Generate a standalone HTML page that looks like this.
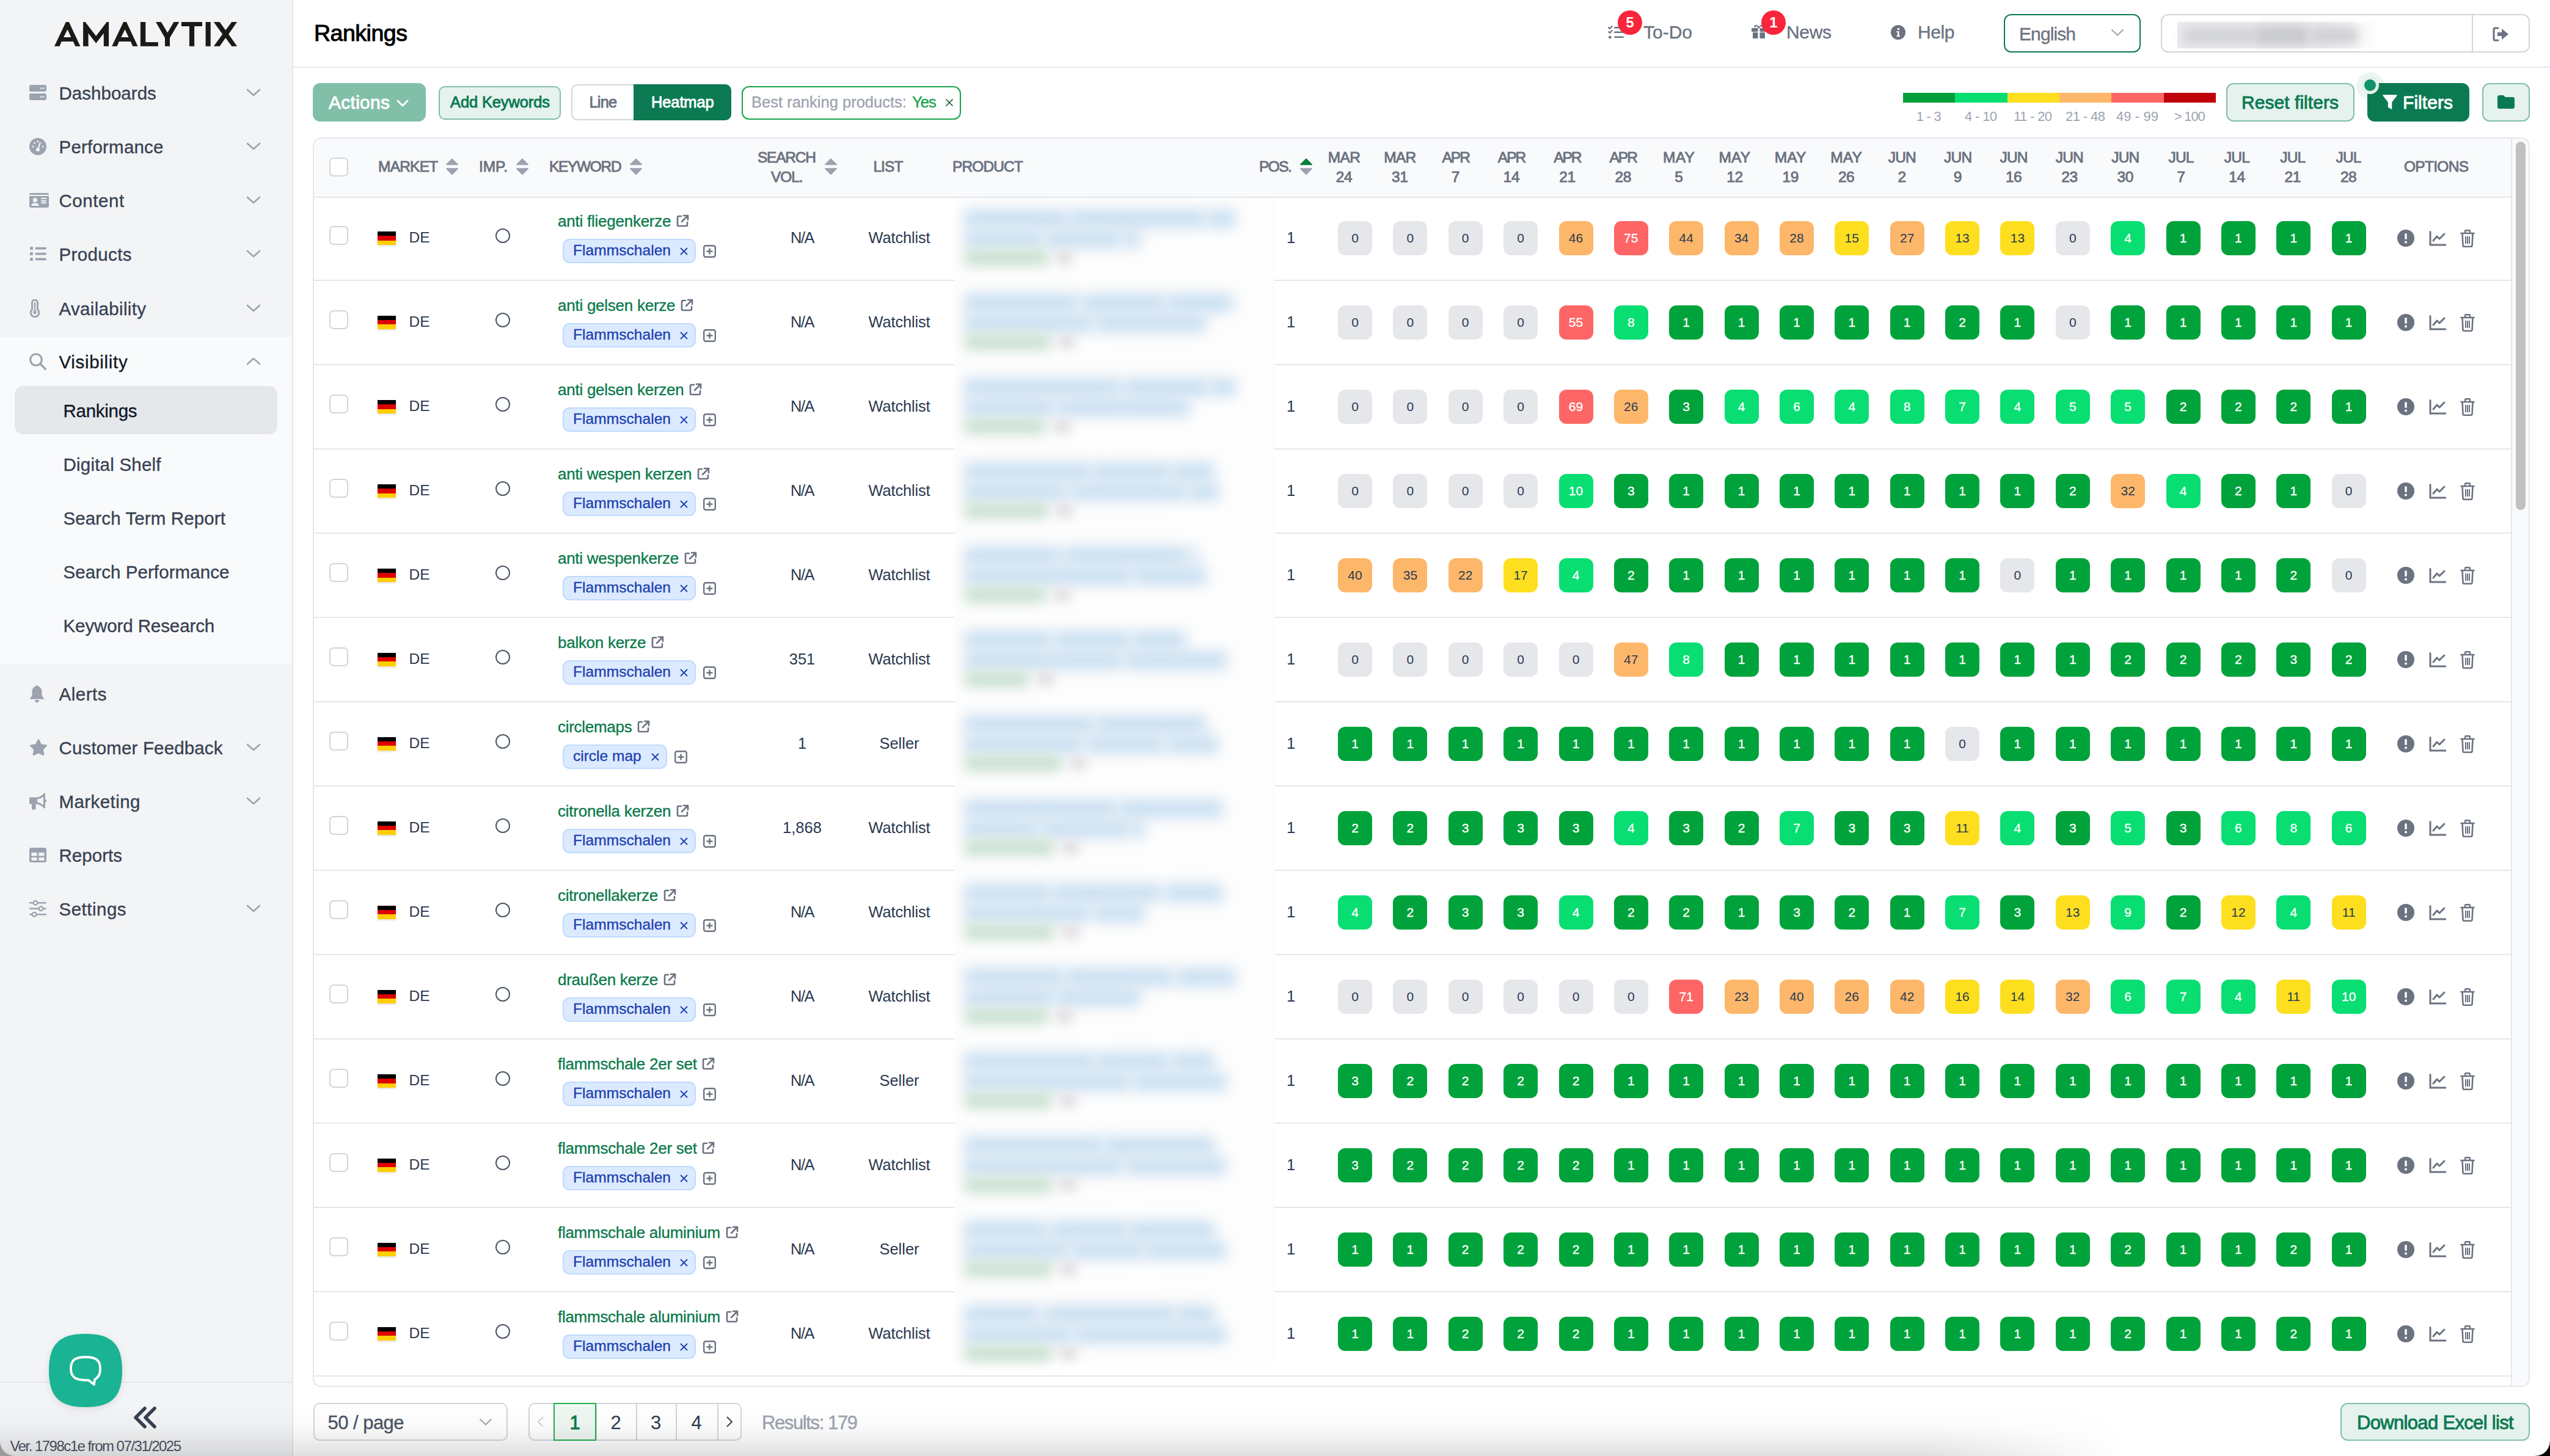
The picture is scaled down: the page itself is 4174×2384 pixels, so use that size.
<!DOCTYPE html><html><head><meta charset="utf-8"><title>Rankings</title><style>
html,body{margin:0;padding:0;}
body{width:4174px;height:2384px;overflow:hidden;position:relative;background:#fff;font-family:"Liberation Sans",sans-serif;color:#1f2937;}
.t{position:absolute;line-height:1;white-space:nowrap;}
.r{position:absolute;box-sizing:border-box;}
.b{font-weight:bold;}
.cell{position:absolute;width:56px;height:56px;border-radius:12px;font-size:21px;line-height:56px;text-align:center;}
</style></head><body>
<div class="r" style="left:0.0px;top:0.0px;width:480.0px;height:2384.0px;background:#f3f4f6;border-right:2px solid #e5e7eb;"></div>
<div class="r" style="left:0.0px;top:552.0px;width:478.0px;height:535.0px;background:#f9fafb;"></div>
<svg class="r" style="left:0;top:0" width="420" height="100" viewBox="0 0 420 100"><path fill-rule="evenodd" fill="#1a1a17" d="M89 75.8 L107.9 36 L112.9 36 L131.4 75.8 L123.2 75.8 L119.9 68 L100.7 68 L97.6 75.8 Z M104.2 61.1 L116.4 61.1 L110.4 48.2 Z M183.1 75.8 L202 36 L207 36 L225.5 75.8 L217.3 75.8 L214 68 L194.8 68 L191.7 75.8 Z M198.3 61.1 L210.5 61.1 L204.5 48.2 Z M136.1 75.8 L136.1 36 L139.5 36 L157.2 58.9 L174.8 36 L178.1 36 L178.1 75.8 L169.8 75.8 L169.8 54.5 L157.2 70.8 L144.6 54.5 L144.6 75.8 Z M229.9 36 L238.3 36 L238.3 68.9 L258.8 68.9 L258.8 75.8 L229.9 75.8 Z M255 36 L263.8 36 L274.2 53.6 L284.5 36 L293.3 36 L278 62 L278 75.8 L270 75.8 L270 62 Z M297 36 L331 36 L331 43 L318.1 43 L318.1 75.8 L309.9 75.8 L309.9 43 L297 43 Z M336.6 36 L344.7 36 L344.7 75.8 L336.6 75.8 Z M349.8 36 L359.6 36 L369.2 49.5 L379.3 36 L388 36 L374.2 56 L388 75.8 L379.3 75.8 L369.2 62 L359.6 75.8 L349.8 75.8 L364.2 56 Z"/></svg>
<svg class="r" style="left:48.0px;top:138.5px;" width="28" height="26" viewBox="0 0 28 26"><rect x="0" y="0" width="28" height="11" rx="3" fill="#9ca3af"/><rect x="0" y="14" width="28" height="11" rx="3" fill="#9ca3af"/><circle cx="19" cy="5.5" r="1.3" fill="#f3f4f6"/><circle cx="23" cy="5.5" r="1.3" fill="#f3f4f6"/><circle cx="19" cy="19.5" r="1.3" fill="#f3f4f6"/><circle cx="23" cy="19.5" r="1.3" fill="#f3f4f6"/></svg>
<div class="t" style="left:96.5px;top:137.5px;font-size:29.5px;letter-spacing:0.03px;color:#374151;-webkit-text-stroke:0.35px currentColor;">Dashboards</div>
<svg class="r" style="left:403.0px;top:144.5px;" width="24" height="13" viewBox="0 0 24 13"><path d="M2 2 L12 11 L22 2" fill="none" stroke="#9ca3af" stroke-width="2.6" stroke-linecap="round" stroke-linejoin="round"/></svg>
<svg class="r" style="left:48.0px;top:225.5px;" width="28" height="28" viewBox="0 0 28 28"><circle cx="14" cy="14" r="14" fill="#9ca3af"/><circle cx="14" cy="19" r="3" fill="#f3f4f6"/><path d="M14 19 L18 7" stroke="#f3f4f6" stroke-width="2.2"/><circle cx="6" cy="14" r="1.5" fill="#f3f4f6"/><circle cx="22" cy="14" r="1.5" fill="#f3f4f6"/><circle cx="8.5" cy="8" r="1.5" fill="#f3f4f6"/><circle cx="14" cy="5.5" r="1.5" fill="#f3f4f6"/></svg>
<div class="t" style="left:96.5px;top:225.5px;font-size:29.5px;letter-spacing:0.21px;color:#374151;-webkit-text-stroke:0.35px currentColor;">Performance</div>
<svg class="r" style="left:403.0px;top:232.5px;" width="24" height="13" viewBox="0 0 24 13"><path d="M2 2 L12 11 L22 2" fill="none" stroke="#9ca3af" stroke-width="2.6" stroke-linecap="round" stroke-linejoin="round"/></svg>
<svg class="r" style="left:48.0px;top:314.0px;" width="32" height="28" viewBox="0 0 32 28"><path d="M0 5 L0 4.5 Q0 2 3 2 L29 2 Q32 2 32 4.5 L32 5 Z" fill="#9ca3af"/><path d="M0 7 L32 7 L32 23 Q32 26 29 26 L3 26 Q0 26 0 23 Z" fill="#9ca3af"/><circle cx="9.4" cy="13.7" r="3.6" fill="#f3f4f6"/><path d="M3 23 Q4 18.8 8 18.8 L11 18.8 Q15 18.8 16 23 Z" fill="#f3f4f6"/><rect x="19" y="10" width="9" height="2.1" rx="1" fill="#f3f4f6"/><rect x="19" y="13.9" width="9" height="2" rx="1" fill="#f3f4f6"/><rect x="19" y="17.2" width="9" height="2" rx="1" fill="#f3f4f6"/></svg>
<div class="t" style="left:96.5px;top:314.0px;font-size:29.5px;letter-spacing:0.55px;color:#374151;-webkit-text-stroke:0.35px currentColor;">Content</div>
<svg class="r" style="left:403.0px;top:321.0px;" width="24" height="13" viewBox="0 0 24 13"><path d="M2 2 L12 11 L22 2" fill="none" stroke="#9ca3af" stroke-width="2.6" stroke-linecap="round" stroke-linejoin="round"/></svg>
<svg class="r" style="left:48.0px;top:404.0px;" width="28" height="23" viewBox="0 0 28 23"><rect x="1" y="0" width="5" height="5" rx="1.3" fill="#9ca3af"/><rect x="1" y="9" width="5" height="5" rx="1.3" fill="#9ca3af"/><rect x="1" y="18" width="5" height="5" rx="1.3" fill="#9ca3af"/><rect x="9.5" y="0.8" width="18.5" height="3.6" rx="1.8" fill="#9ca3af"/><rect x="9.5" y="9.8" width="18.5" height="3.6" rx="1.8" fill="#9ca3af"/><rect x="9.5" y="18.6" width="18.5" height="3.6" rx="1.8" fill="#9ca3af"/></svg>
<div class="t" style="left:96.5px;top:401.5px;font-size:29.5px;letter-spacing:0.37px;color:#374151;-webkit-text-stroke:0.35px currentColor;">Products</div>
<svg class="r" style="left:403.0px;top:408.5px;" width="24" height="13" viewBox="0 0 24 13"><path d="M2 2 L12 11 L22 2" fill="none" stroke="#9ca3af" stroke-width="2.6" stroke-linecap="round" stroke-linejoin="round"/></svg>
<svg class="r" style="left:49.0px;top:489.5px;" width="16" height="30" viewBox="0 0 16 30"><path d="M3.5 5.5 A4.5 4.5 0 0 1 12.5 5.5 L12.5 16.8 A6.8 6.8 0 1 1 3.5 16.8 Z" fill="none" stroke="#9ca3af" stroke-width="3"/><path d="M8 6 L8 19" stroke="#9ca3af" stroke-width="2.4" stroke-linecap="round"/><circle cx="8" cy="21.3" r="2.8" fill="#9ca3af"/></svg>
<div class="t" style="left:96.5px;top:490.5px;font-size:29.5px;letter-spacing:0.33px;color:#374151;-webkit-text-stroke:0.35px currentColor;">Availability</div>
<svg class="r" style="left:403.0px;top:497.5px;" width="24" height="13" viewBox="0 0 24 13"><path d="M2 2 L12 11 L22 2" fill="none" stroke="#9ca3af" stroke-width="2.6" stroke-linecap="round" stroke-linejoin="round"/></svg>
<svg class="r" style="left:48.0px;top:577.5px;" width="28" height="28" viewBox="0 0 28 28"><circle cx="11" cy="11" r="9.3" fill="none" stroke="#9ca3af" stroke-width="3"/><path d="M18 18 L26.5 26.5" stroke="#9ca3af" stroke-width="3.2" stroke-linecap="round"/></svg>
<div class="t" style="left:96.5px;top:577.5px;font-size:29.5px;letter-spacing:0.69px;color:#111827;-webkit-text-stroke:0.35px currentColor;">Visibility</div>
<svg class="r" style="left:403.0px;top:584.5px;" width="24" height="13" viewBox="0 0 24 13"><path d="M2 11 L12 2 L22 11" fill="none" stroke="#9ca3af" stroke-width="2.6" stroke-linecap="round" stroke-linejoin="round"/></svg>
<svg class="r" style="left:48.0px;top:1120.5px;" width="26" height="30" viewBox="0 0 26 30"><path d="M12.5 1 C13.5 1 14 1.8 14 2.6 C18.5 3.6 20.5 7.5 20.5 12 L20.5 17 C20.5 19 22.5 21 24 22.5 Q25 23.8 23.5 23.8 L1.5 23.8 Q0 23.8 1 22.5 C2.5 21 4.5 19 4.5 17 L4.5 12 C4.5 7.5 6.5 3.6 11 2.6 C11 1.8 11.5 1 12.5 1 Z" fill="#9ca3af"/><path d="M9 25.3 L16 25.3 Q16 29.3 12.5 29.3 Q9 29.3 9 25.3 Z" fill="#9ca3af"/></svg>
<div class="t" style="left:96.5px;top:1121.5px;font-size:29.5px;letter-spacing:0.52px;color:#374151;-webkit-text-stroke:0.35px currentColor;">Alerts</div>
<svg class="r" style="left:48.0px;top:1209.5px;" width="30" height="28" viewBox="0 0 30 28"><path d="M15 2 L18.8 9.8 L27.5 11 L21.2 17 L22.8 25.6 L15 21.5 L7.2 25.6 L8.8 17 L2.5 11 L11.2 9.8 Z" fill="#9ca3af" stroke="#9ca3af" stroke-width="3" stroke-linejoin="round"/></svg>
<div class="t" style="left:96.5px;top:1209.5px;font-size:29.5px;letter-spacing:0.15px;color:#374151;-webkit-text-stroke:0.35px currentColor;">Customer Feedback</div>
<svg class="r" style="left:403.0px;top:1216.5px;" width="24" height="13" viewBox="0 0 24 13"><path d="M2 2 L12 11 L22 2" fill="none" stroke="#9ca3af" stroke-width="2.6" stroke-linecap="round" stroke-linejoin="round"/></svg>
<svg class="r" style="left:48.0px;top:1296.5px;" width="29" height="30" viewBox="0 0 29 30"><rect x="0" y="8.6" width="12" height="11.1" rx="2" fill="#9ca3af"/><rect x="4" y="18" width="6.6" height="10.8" rx="2" fill="#9ca3af"/><path d="M11 8.6 Q18 8.6 24 2 Q26 0.6 26 3 L26 25.4 Q26 27.6 24 26.2 Q18 19.7 11 19.7 Z" fill="#9ca3af"/><path d="M13.2 11.3 Q18.6 11 23 7.2 L23 21.2 Q18.6 17.4 13.2 17.1 Z" fill="#f3f4f6"/><rect x="25.5" y="12.2" width="2.6" height="4.2" rx="1.3" fill="#9ca3af"/></svg>
<div class="t" style="left:96.5px;top:1297.5px;font-size:29.5px;letter-spacing:0.43px;color:#374151;-webkit-text-stroke:0.35px currentColor;">Marketing</div>
<svg class="r" style="left:403.0px;top:1304.5px;" width="24" height="13" viewBox="0 0 24 13"><path d="M2 2 L12 11 L22 2" fill="none" stroke="#9ca3af" stroke-width="2.6" stroke-linecap="round" stroke-linejoin="round"/></svg>
<svg class="r" style="left:48.0px;top:1387.5px;" width="28" height="24" viewBox="0 0 28 24"><rect x="0" y="0" width="28" height="24" rx="3" fill="#9ca3af"/><rect x="3.5" y="8" width="9" height="5.5" fill="#f3f4f6"/><rect x="15.5" y="8" width="9" height="5.5" fill="#f3f4f6"/><rect x="3.5" y="16" width="9" height="5" fill="#f3f4f6"/><rect x="15.5" y="16" width="9" height="5" fill="#f3f4f6"/></svg>
<div class="t" style="left:96.5px;top:1385.5px;font-size:29.5px;letter-spacing:0.03px;color:#374151;-webkit-text-stroke:0.35px currentColor;">Reports</div>
<svg class="r" style="left:48.0px;top:1473.5px;" width="28" height="28" viewBox="0 0 28 28"><rect x="0" y="3" width="28" height="2.6" rx="1.3" fill="#9ca3af"/><rect x="0" y="12.5" width="28" height="2.6" rx="1.3" fill="#9ca3af"/><rect x="0" y="22" width="28" height="2.6" rx="1.3" fill="#9ca3af"/><circle cx="10" cy="4.3" r="3.4" fill="#f3f4f6" stroke="#9ca3af" stroke-width="2.2"/><circle cx="19" cy="13.8" r="3.4" fill="#f3f4f6" stroke="#9ca3af" stroke-width="2.2"/><circle cx="8" cy="23.3" r="3.4" fill="#f3f4f6" stroke="#9ca3af" stroke-width="2.2"/></svg>
<div class="t" style="left:96.5px;top:1473.5px;font-size:29.5px;letter-spacing:0.49px;color:#374151;-webkit-text-stroke:0.35px currentColor;">Settings</div>
<svg class="r" style="left:403.0px;top:1480.5px;" width="24" height="13" viewBox="0 0 24 13"><path d="M2 2 L12 11 L22 2" fill="none" stroke="#9ca3af" stroke-width="2.6" stroke-linecap="round" stroke-linejoin="round"/></svg>
<div class="r" style="left:24.0px;top:632.0px;width:430.0px;height:79.0px;background:#e5e7eb;border-radius:14px;"></div>
<div class="t" style="left:103.5px;top:657.5px;font-size:29.5px;letter-spacing:-0.28px;color:#111827;-webkit-text-stroke:0.35px currentColor;">Rankings</div>
<div class="t" style="left:103.5px;top:745.5px;font-size:29.5px;letter-spacing:0.22px;color:#374151;-webkit-text-stroke:0.35px currentColor;">Digital Shelf</div>
<div class="t" style="left:103.5px;top:833.5px;font-size:29.5px;letter-spacing:0.12px;color:#374151;-webkit-text-stroke:0.35px currentColor;">Search Term Report</div>
<div class="t" style="left:103.5px;top:921.5px;font-size:29.5px;letter-spacing:0.08px;color:#374151;-webkit-text-stroke:0.35px currentColor;">Search Performance</div>
<div class="t" style="left:103.5px;top:1009.5px;font-size:29.5px;letter-spacing:-0.10px;color:#374151;-webkit-text-stroke:0.35px currentColor;">Keyword Research</div>
<div class="r" style="left:0.0px;top:2262.0px;width:478.0px;height:2.0px;background:#e5e7eb;"></div>
<svg class="r" style="left:80.0px;top:2184.0px;filter:drop-shadow(0 3px 6px rgba(0,0,0,0.10));" width="120" height="120" viewBox="0 0 120 120"><path d="M60 0 C103 0 120 17 120 60 C120 103 103 120 60 120 C17 120 0 103 0 60 C0 17 17 0 60 0 Z" fill="#1ab394"/></svg>
<svg class="r" style="left:112.0px;top:2219.0px;" width="56" height="56" viewBox="0 0 56 56"><path d="M28 3 C44 3 52 7 52 22 C52 32 49 36 43 40 L42 48 L33 41 C14 41 4 38 4 22 C4 7 12 3 28 3 Z" fill="none" stroke="#fff" stroke-width="3.8" stroke-linejoin="round"/></svg>
<svg class="r" style="left:217.0px;top:2303.0px;" width="40" height="36" viewBox="0 0 40 36"><path d="M20 3 L5 18 L20 33 M36 3 L21 18 L36 33" fill="none" stroke="#374151" stroke-width="5.5" stroke-linecap="round" stroke-linejoin="round"/></svg>
<div class="t" style="left:16.5px;top:2355.7px;font-size:24px;letter-spacing:-1.52px;color:#4b5563;">Ver. 1798c1e from 07/31/2025</div>
<div class="r" style="left:480.0px;top:109.0px;width:3694.0px;height:2.0px;background:#e5e7eb;"></div>
<div class="t" style="left:514.0px;top:35.8px;font-size:37.5px;letter-spacing:-0.48px;color:#000;-webkit-text-stroke:1px currentColor;">Rankings</div>
<svg class="r" style="left:2632.0px;top:42.0px;" width="26" height="22" viewBox="0 0 26 22"><path d="M1 3 L3 5 L6.5 1 M1 10 L3 12 L6.5 8" fill="none" stroke="#6b7280" stroke-width="2" stroke-linecap="round" stroke-linejoin="round"/><circle cx="3.2" cy="19" r="2.3" fill="#6b7280"/><rect x="10" y="2" width="16" height="2.6" rx="1.3" fill="#6b7280"/><rect x="10" y="9.5" width="16" height="2.6" rx="1.3" fill="#6b7280"/><rect x="10" y="17.5" width="16" height="2.6" rx="1.3" fill="#6b7280"/></svg>
<div class="t" style="left:2690.0px;top:37.6px;font-size:30px;letter-spacing:-0.01px;color:#6b7280;-webkit-text-stroke:0.35px currentColor;">To-Do</div>
<div class="r" style="left:2648.0px;top:17.0px;width:40.0px;height:40.0px;background:#f9253a;border-radius:50%;"></div>
<div class="t" style="left:2648.0px;top:25.2px;font-size:24px;width:40px;text-align:center;color:#fff;font-weight:bold;">5</div>
<svg class="r" style="left:2867.0px;top:40.0px;" width="24" height="23" viewBox="0 0 24 23"><rect x="0" y="6" width="24" height="6" rx="1" fill="#6b7280"/><rect x="2" y="13" width="20" height="10" rx="1" fill="#6b7280"/><rect x="10.5" y="6" width="3" height="17" fill="#fff"/><path d="M12 6 C9 0 4 1 6 5 M12 6 C15 0 20 1 18 5" fill="none" stroke="#6b7280" stroke-width="2"/></svg>
<div class="t" style="left:2924.0px;top:37.6px;font-size:30px;letter-spacing:-0.34px;color:#6b7280;-webkit-text-stroke:0.35px currentColor;">News</div>
<div class="r" style="left:2883.0px;top:17.0px;width:40.0px;height:40.0px;background:#f9253a;border-radius:50%;"></div>
<div class="t" style="left:2883.0px;top:25.2px;font-size:24px;width:40px;text-align:center;color:#fff;font-weight:bold;">1</div>
<svg class="r" style="left:3095.0px;top:41.0px;" width="24" height="24" viewBox="0 0 24 24"><circle cx="12" cy="12" r="12" fill="#6b7280"/><circle cx="12.5" cy="6.5" r="1.8" fill="#fff"/><path d="M9.5 10 L13.5 10 L13.5 17 L15 17 L15 19 L9.5 19 L9.5 17 L11 17 L11 12 L9.5 12 Z" fill="#fff"/></svg>
<div class="t" style="left:3139.0px;top:37.6px;font-size:30px;letter-spacing:-0.41px;color:#6b7280;-webkit-text-stroke:0.35px currentColor;">Help</div>
<div class="r" style="left:3280.0px;top:23.0px;width:224.0px;height:63.0px;border:2.5px solid #0b7a52;border-radius:12px;background:#fff;"></div>
<div class="t" style="left:3305.0px;top:40.6px;font-size:30px;letter-spacing:-0.90px;color:#6b7280;-webkit-text-stroke:0.35px currentColor;">English</div>
<svg class="r" style="left:3455.0px;top:47.0px;" width="22" height="12" viewBox="0 0 22 12"><path d="M1.5 1.5 L11 10.5 L20.5 1.5" fill="none" stroke="#9ca3af" stroke-width="2"/></svg>
<div class="r" style="left:3537.0px;top:23.0px;width:604.0px;height:63.0px;border:2px solid #d1d5db;border-radius:12px;background:#fff;"></div>
<div class="r" style="left:4046.0px;top:25.0px;width:2.0px;height:59.0px;background:#d1d5db;"></div>
<div class="r" style="left:3564px;top:36px;width:330px;height:43px;background:linear-gradient(to right,#ececee 0,#ececee 75%,rgba(255,255,255,0) 100%);"></div>
<div class="r" style="left:3572px;top:44px;width:120px;height:28px;background:#d3d4d8;filter:blur(8px);border-radius:10px;"></div>
<div class="r" style="left:3690px;top:42px;width:90px;height:32px;background:#c9cace;filter:blur(8px);border-radius:10px;"></div>
<div class="r" style="left:3780px;top:44px;width:80px;height:28px;background:#d0d1d5;filter:blur(8px);border-radius:10px;"></div>
<svg class="r" style="left:4080.0px;top:44.0px;" width="28" height="24" viewBox="0 0 28 24"><path d="M9 2 L4 2 Q2 2 2 4 L2 20 Q2 22 4 22 L9 22" fill="none" stroke="#6b7280" stroke-width="3" stroke-linecap="round"/><path d="M8 9 L15 9 L15 3 L26 12 L15 21 L15 15 L8 15 Z" fill="#6b7280"/></svg>
<div class="r" style="left:512.0px;top:136.0px;width:185.0px;height:63.0px;background:#82bfa8;border-radius:12px;"></div>
<div class="t" style="left:538.0px;top:152.6px;font-size:30px;letter-spacing:0.27px;color:#fff;-webkit-text-stroke:0.9px currentColor;">Actions</div>
<svg class="r" style="left:649.0px;top:163.0px;" width="20" height="12" viewBox="0 0 20 12"><path d="M2 2 L10 10 L18 2" fill="none" stroke="#fff" stroke-width="3" stroke-linecap="round" stroke-linejoin="round"/></svg>
<div class="r" style="left:718.0px;top:140.5px;width:200.0px;height:55.0px;background:#e6f2ee;border:2px solid #82bfa8;border-radius:10px;"></div>
<div class="t" style="left:737.0px;top:155.4px;font-size:25.5px;letter-spacing:-0.13px;color:#0b7a52;-webkit-text-stroke:0.9px currentColor;">Add Keywords</div>
<div class="r" style="left:935.0px;top:138.0px;width:262.0px;height:59.0px;background:#fff;border:2px solid #d1d5db;border-radius:10px;"></div>
<div class="r" style="left:1037.0px;top:138.0px;width:160.0px;height:59.0px;background:#0b7a52;border-radius:0 10px 10px 0;"></div>
<div class="t" style="left:964.5px;top:155.4px;font-size:25.5px;letter-spacing:-0.84px;color:#6b7280;-webkit-text-stroke:0.9px currentColor;">Line</div>
<div class="t" style="left:1066.0px;top:155.4px;font-size:25.5px;letter-spacing:-0.13px;color:#fff;-webkit-text-stroke:0.9px currentColor;">Heatmap</div>
<div class="r" style="left:1214.0px;top:140.5px;width:359.0px;height:55.0px;background:#fff;border:2.5px solid #16a34a;border-radius:12px;"></div>
<div class="t" style="left:1230.0px;top:154.9px;font-size:25.5px;letter-spacing:0.01px;color:#9ca3af;-webkit-text-stroke:0.35px currentColor;">Best ranking products:</div>
<div class="t" style="left:1493.0px;top:154.9px;font-size:25.5px;letter-spacing:-0.95px;color:#16a34a;-webkit-text-stroke:0.35px currentColor;">Yes</div>
<svg class="r" style="left:1547.0px;top:161.0px;" width="14" height="14" viewBox="0 0 14 14"><path d="M1.5 1.5 L12.5 12.5 M12.5 1.5 L1.5 12.5" stroke="#14532d" stroke-width="1.6"/></svg>
<div class="r" style="left:3115.0px;top:152.0px;width:85.6px;height:16.0px;background:#009f3a;"></div>
<div class="t" style="left:3136.7px;top:180.4px;font-size:22px;letter-spacing:-0.75px;color:#9ca3af;">1 - 3</div>
<div class="r" style="left:3200.3px;top:152.0px;width:85.6px;height:16.0px;background:#08de72;"></div>
<div class="t" style="left:3216.0px;top:180.4px;font-size:22px;letter-spacing:-0.65px;color:#9ca3af;">4 - 10</div>
<div class="r" style="left:3285.7px;top:152.0px;width:85.6px;height:16.0px;background:#fddf20;"></div>
<div class="t" style="left:3296.0px;top:180.4px;font-size:22px;letter-spacing:-0.64px;color:#9ca3af;">11 - 20</div>
<div class="r" style="left:3371.0px;top:152.0px;width:85.6px;height:16.0px;background:#fdb76a;"></div>
<div class="t" style="left:3381.0px;top:180.4px;font-size:22px;letter-spacing:-0.58px;color:#9ca3af;">21 - 48</div>
<div class="r" style="left:3456.3px;top:152.0px;width:85.6px;height:16.0px;background:#fe6666;"></div>
<div class="t" style="left:3464.0px;top:180.4px;font-size:22px;letter-spacing:0.09px;color:#9ca3af;">49 - 99</div>
<div class="r" style="left:3541.7px;top:152.0px;width:85.6px;height:16.0px;background:#c0000a;"></div>
<div class="t" style="left:3558.7px;top:180.4px;font-size:22px;letter-spacing:-1.16px;color:#9ca3af;">&gt; 100</div>
<div class="r" style="left:3644.0px;top:136.0px;width:210.0px;height:63.0px;background:#e6f2ee;border:2px solid #82bfa8;border-radius:12px;"></div>
<div class="t" style="left:3669.0px;top:152.6px;font-size:30px;letter-spacing:0.05px;color:#0b7a52;-webkit-text-stroke:0.9px currentColor;">Reset filters</div>
<div class="r" style="left:3875.0px;top:136.0px;width:167.0px;height:63.0px;background:#0b7a52;border-radius:12px;"></div>
<svg class="r" style="left:3900.0px;top:155.0px;" width="24" height="26" viewBox="0 0 24 26"><path d="M1 1 L23 1 L14.5 12 L14.5 23 L9.5 20 L9.5 12 Z" fill="#fff" stroke="#fff" stroke-width="1.5" stroke-linejoin="round"/></svg>
<div class="t" style="left:3933.0px;top:152.6px;font-size:30px;letter-spacing:0.05px;color:#fff;-webkit-text-stroke:0.9px currentColor;">Filters</div>
<div class="r" style="left:3857px;top:118px;width:46px;height:46px;border-radius:50%;background:rgba(11,122,82,0.08);"></div>
<div class="r" style="left:3865px;top:125px;width:29px;height:29px;border-radius:50%;background:#0d946a;border:5px solid #e6f1ec;"></div>
<div class="r" style="left:4063.0px;top:136.0px;width:78.0px;height:63.0px;background:#e6f2ee;border:2px solid #82bfa8;border-radius:12px;"></div>
<svg class="r" style="left:4088.0px;top:156.0px;" width="28" height="22" viewBox="0 0 28 22"><path d="M0 3 Q0 0 3 0 L10 0 L13 3 L25 3 Q28 3 28 6 L28 19 Q28 22 25 22 L3 22 Q0 22 0 19 Z" fill="#0b7a52"/></svg>
<div class="r" style="left:512.0px;top:225.0px;width:3629.0px;height:2046.0px;border:2px solid #e5e7eb;border-radius:14px;background:#fff;"></div>
<div class="r" style="left:514.0px;top:227.0px;width:3596.0px;height:96.0px;background:#f9fafb;border-radius:12px 0 0 0;"></div>
<div class="r" style="left:514.0px;top:322.0px;width:3596.0px;height:2.0px;background:#e5e7eb;"></div>
<div class="r" style="left:4110.0px;top:227.0px;width:2.0px;height:2042.0px;background:#e5e7eb;"></div>
<div class="r" style="left:4112.0px;top:227.0px;width:27.0px;height:2042.0px;background:#f9fafb;border-radius:0 12px 12px 0;"></div>
<div class="r" style="left:4118.0px;top:232.0px;width:16.0px;height:603.0px;background:#c1c1c1;border-radius:8px;"></div>
<div class="r" style="left:539.0px;top:258.0px;width:31.0px;height:31.0px;border:2px solid #d1d5db;border-radius:7px;background:#fff;"></div>
<div class="t" style="left:619.0px;top:261.3px;font-size:24.5px;letter-spacing:-0.78px;color:#6b7280;-webkit-text-stroke:0.9px currentColor;">MARKET</div>
<svg class="r" style="left:730.0px;top:258.0px;" width="20" height="30" viewBox="-1 -1 22 32"><path d="M10 0 L20 10 L0 10 Z" fill="#9ca3af" stroke="#9ca3af" stroke-width="2" stroke-linejoin="round" transform="translate(0 1)"/><path d="M0 19 L20 19 L10 29 Z" fill="#9ca3af" stroke="#9ca3af" stroke-width="2" stroke-linejoin="round" transform="translate(0 -0.5)"/></svg>
<div class="t" style="left:784.0px;top:261.3px;font-size:24.5px;letter-spacing:-0.07px;color:#6b7280;-webkit-text-stroke:0.9px currentColor;">IMP.</div>
<svg class="r" style="left:845.0px;top:258.0px;" width="20" height="30" viewBox="-1 -1 22 32"><path d="M10 0 L20 10 L0 10 Z" fill="#9ca3af" stroke="#9ca3af" stroke-width="2" stroke-linejoin="round" transform="translate(0 1)"/><path d="M0 19 L20 19 L10 29 Z" fill="#9ca3af" stroke="#9ca3af" stroke-width="2" stroke-linejoin="round" transform="translate(0 -0.5)"/></svg>
<div class="t" style="left:899.0px;top:261.3px;font-size:24.5px;letter-spacing:-1.33px;color:#6b7280;-webkit-text-stroke:0.9px currentColor;">KEYWORD</div>
<svg class="r" style="left:1031.0px;top:258.0px;" width="20" height="30" viewBox="-1 -1 22 32"><path d="M10 0 L20 10 L0 10 Z" fill="#9ca3af" stroke="#9ca3af" stroke-width="2" stroke-linejoin="round" transform="translate(0 1)"/><path d="M0 19 L20 19 L10 29 Z" fill="#9ca3af" stroke="#9ca3af" stroke-width="2" stroke-linejoin="round" transform="translate(0 -0.5)"/></svg>
<div class="t" style="left:1240.0px;top:245.8px;font-size:24.5px;letter-spacing:-1.22px;color:#6b7280;-webkit-text-stroke:0.9px currentColor;">SEARCH</div>
<div class="t" style="left:1262.0px;top:277.8px;font-size:24.5px;letter-spacing:-1.11px;color:#6b7280;-webkit-text-stroke:0.9px currentColor;">VOL.</div>
<svg class="r" style="left:1350.0px;top:258.0px;" width="20" height="30" viewBox="-1 -1 22 32"><path d="M10 0 L20 10 L0 10 Z" fill="#9ca3af" stroke="#9ca3af" stroke-width="2" stroke-linejoin="round" transform="translate(0 1)"/><path d="M0 19 L20 19 L10 29 Z" fill="#9ca3af" stroke="#9ca3af" stroke-width="2" stroke-linejoin="round" transform="translate(0 -0.5)"/></svg>
<div class="t" style="left:1429.4px;top:261.3px;font-size:24.5px;letter-spacing:-0.92px;color:#6b7280;-webkit-text-stroke:0.9px currentColor;">LIST</div>
<div class="t" style="left:1559.0px;top:261.3px;font-size:24.5px;letter-spacing:-0.90px;color:#6b7280;-webkit-text-stroke:0.9px currentColor;">PRODUCT</div>
<div class="t" style="left:2061.0px;top:261.3px;font-size:24.5px;letter-spacing:-1.62px;color:#6b7280;-webkit-text-stroke:0.9px currentColor;">POS.</div>
<svg class="r" style="left:2128.0px;top:258.0px;" width="20" height="30" viewBox="-1 -1 22 32"><path d="M10 0 L20 10 L0 10 Z" fill="#0a7d3a" stroke="#0a7d3a" stroke-width="2" stroke-linejoin="round" transform="translate(0 1)"/><path d="M0 19 L20 19 L10 29 Z" fill="#9ca3af" stroke="#9ca3af" stroke-width="2" stroke-linejoin="round" transform="translate(0 -0.5)"/></svg>
<div class="t" style="left:2160.0px;top:245.8px;font-size:24.5px;letter-spacing:-0.72px;width:80px;text-align:center;color:#6b7280;-webkit-text-stroke:0.9px currentColor;">MAR</div>
<div class="t" style="left:2160.0px;top:277.8px;font-size:24.5px;letter-spacing:-0.45px;width:80px;text-align:center;color:#6b7280;-webkit-text-stroke:0.9px currentColor;">24</div>
<div class="t" style="left:2251.3px;top:245.8px;font-size:24.5px;letter-spacing:-0.72px;width:80px;text-align:center;color:#6b7280;-webkit-text-stroke:0.9px currentColor;">MAR</div>
<div class="t" style="left:2251.3px;top:277.8px;font-size:24.5px;letter-spacing:-0.45px;width:80px;text-align:center;color:#6b7280;-webkit-text-stroke:0.9px currentColor;">31</div>
<div class="t" style="left:2342.7px;top:245.8px;font-size:24.5px;letter-spacing:-2.04px;width:80px;text-align:center;color:#6b7280;-webkit-text-stroke:0.9px currentColor;">APR</div>
<div class="t" style="left:2342.7px;top:277.8px;font-size:24.5px;letter-spacing:0.00px;width:80px;text-align:center;color:#6b7280;-webkit-text-stroke:0.9px currentColor;">7</div>
<div class="t" style="left:2434.0px;top:245.8px;font-size:24.5px;letter-spacing:-2.04px;width:80px;text-align:center;color:#6b7280;-webkit-text-stroke:0.9px currentColor;">APR</div>
<div class="t" style="left:2434.0px;top:277.8px;font-size:24.5px;letter-spacing:-0.45px;width:80px;text-align:center;color:#6b7280;-webkit-text-stroke:0.9px currentColor;">14</div>
<div class="t" style="left:2525.4px;top:245.8px;font-size:24.5px;letter-spacing:-2.04px;width:80px;text-align:center;color:#6b7280;-webkit-text-stroke:0.9px currentColor;">APR</div>
<div class="t" style="left:2525.4px;top:277.8px;font-size:24.5px;letter-spacing:-0.45px;width:80px;text-align:center;color:#6b7280;-webkit-text-stroke:0.9px currentColor;">21</div>
<div class="t" style="left:2616.7px;top:245.8px;font-size:24.5px;letter-spacing:-2.04px;width:80px;text-align:center;color:#6b7280;-webkit-text-stroke:0.9px currentColor;">APR</div>
<div class="t" style="left:2616.7px;top:277.8px;font-size:24.5px;letter-spacing:-0.45px;width:80px;text-align:center;color:#6b7280;-webkit-text-stroke:0.9px currentColor;">28</div>
<div class="t" style="left:2708.0px;top:245.8px;font-size:24.5px;letter-spacing:0.21px;width:80px;text-align:center;color:#6b7280;-webkit-text-stroke:0.9px currentColor;">MAY</div>
<div class="t" style="left:2708.0px;top:277.8px;font-size:24.5px;letter-spacing:0.00px;width:80px;text-align:center;color:#6b7280;-webkit-text-stroke:0.9px currentColor;">5</div>
<div class="t" style="left:2799.4px;top:245.8px;font-size:24.5px;letter-spacing:0.21px;width:80px;text-align:center;color:#6b7280;-webkit-text-stroke:0.9px currentColor;">MAY</div>
<div class="t" style="left:2799.4px;top:277.8px;font-size:24.5px;letter-spacing:-0.45px;width:80px;text-align:center;color:#6b7280;-webkit-text-stroke:0.9px currentColor;">12</div>
<div class="t" style="left:2890.7px;top:245.8px;font-size:24.5px;letter-spacing:0.21px;width:80px;text-align:center;color:#6b7280;-webkit-text-stroke:0.9px currentColor;">MAY</div>
<div class="t" style="left:2890.7px;top:277.8px;font-size:24.5px;letter-spacing:-0.45px;width:80px;text-align:center;color:#6b7280;-webkit-text-stroke:0.9px currentColor;">19</div>
<div class="t" style="left:2982.1px;top:245.8px;font-size:24.5px;letter-spacing:0.21px;width:80px;text-align:center;color:#6b7280;-webkit-text-stroke:0.9px currentColor;">MAY</div>
<div class="t" style="left:2982.1px;top:277.8px;font-size:24.5px;letter-spacing:-0.45px;width:80px;text-align:center;color:#6b7280;-webkit-text-stroke:0.9px currentColor;">26</div>
<div class="t" style="left:3073.4px;top:245.8px;font-size:24.5px;letter-spacing:-0.81px;width:80px;text-align:center;color:#6b7280;-webkit-text-stroke:0.9px currentColor;">JUN</div>
<div class="t" style="left:3073.4px;top:277.8px;font-size:24.5px;letter-spacing:0.00px;width:80px;text-align:center;color:#6b7280;-webkit-text-stroke:0.9px currentColor;">2</div>
<div class="t" style="left:3164.7px;top:245.8px;font-size:24.5px;letter-spacing:-0.81px;width:80px;text-align:center;color:#6b7280;-webkit-text-stroke:0.9px currentColor;">JUN</div>
<div class="t" style="left:3164.7px;top:277.8px;font-size:24.5px;letter-spacing:0.00px;width:80px;text-align:center;color:#6b7280;-webkit-text-stroke:0.9px currentColor;">9</div>
<div class="t" style="left:3256.1px;top:245.8px;font-size:24.5px;letter-spacing:-0.81px;width:80px;text-align:center;color:#6b7280;-webkit-text-stroke:0.9px currentColor;">JUN</div>
<div class="t" style="left:3256.1px;top:277.8px;font-size:24.5px;letter-spacing:-0.45px;width:80px;text-align:center;color:#6b7280;-webkit-text-stroke:0.9px currentColor;">16</div>
<div class="t" style="left:3347.4px;top:245.8px;font-size:24.5px;letter-spacing:-0.81px;width:80px;text-align:center;color:#6b7280;-webkit-text-stroke:0.9px currentColor;">JUN</div>
<div class="t" style="left:3347.4px;top:277.8px;font-size:24.5px;letter-spacing:-0.45px;width:80px;text-align:center;color:#6b7280;-webkit-text-stroke:0.9px currentColor;">23</div>
<div class="t" style="left:3438.8px;top:245.8px;font-size:24.5px;letter-spacing:-0.81px;width:80px;text-align:center;color:#6b7280;-webkit-text-stroke:0.9px currentColor;">JUN</div>
<div class="t" style="left:3438.8px;top:277.8px;font-size:24.5px;letter-spacing:-0.45px;width:80px;text-align:center;color:#6b7280;-webkit-text-stroke:0.9px currentColor;">30</div>
<div class="t" style="left:3530.1px;top:245.8px;font-size:24.5px;letter-spacing:-0.78px;width:80px;text-align:center;color:#6b7280;-webkit-text-stroke:0.9px currentColor;">JUL</div>
<div class="t" style="left:3530.1px;top:277.8px;font-size:24.5px;letter-spacing:0.00px;width:80px;text-align:center;color:#6b7280;-webkit-text-stroke:0.9px currentColor;">7</div>
<div class="t" style="left:3621.4px;top:245.8px;font-size:24.5px;letter-spacing:-0.78px;width:80px;text-align:center;color:#6b7280;-webkit-text-stroke:0.9px currentColor;">JUL</div>
<div class="t" style="left:3621.4px;top:277.8px;font-size:24.5px;letter-spacing:-0.45px;width:80px;text-align:center;color:#6b7280;-webkit-text-stroke:0.9px currentColor;">14</div>
<div class="t" style="left:3712.8px;top:245.8px;font-size:24.5px;letter-spacing:-0.78px;width:80px;text-align:center;color:#6b7280;-webkit-text-stroke:0.9px currentColor;">JUL</div>
<div class="t" style="left:3712.8px;top:277.8px;font-size:24.5px;letter-spacing:-0.45px;width:80px;text-align:center;color:#6b7280;-webkit-text-stroke:0.9px currentColor;">21</div>
<div class="t" style="left:3804.1px;top:245.8px;font-size:24.5px;letter-spacing:-0.78px;width:80px;text-align:center;color:#6b7280;-webkit-text-stroke:0.9px currentColor;">JUL</div>
<div class="t" style="left:3804.1px;top:277.8px;font-size:24.5px;letter-spacing:-0.45px;width:80px;text-align:center;color:#6b7280;-webkit-text-stroke:0.9px currentColor;">28</div>
<div class="t" style="left:3935.0px;top:261.3px;font-size:24.5px;letter-spacing:-0.71px;color:#6b7280;-webkit-text-stroke:0.9px currentColor;">OPTIONS</div>
<div class="r" style="left:514.0px;top:458.0px;width:3596.0px;height:2.0px;background:#e5e7eb;"></div>
<div class="r" style="left:539.0px;top:369.5px;width:31.0px;height:31.0px;border:2px solid #d1d5db;border-radius:7px;background:#fff;"></div>
<div class="r" style="left:618.0px;top:379.0px;width:30.0px;height:22.0px;background:linear-gradient(#000 0 7px,#dd0000 7px 14.5px,#ffce00 14.5px);box-shadow:0 2px 3px rgba(0,0,0,0.12);"></div>
<div class="t" style="left:669.5px;top:377.3px;font-size:24.5px;color:#2b3950;">DE</div>
<div class="r" style="left:811px;top:374.0px;width:24px;height:24px;border:2.2px solid #4b5563;border-radius:50%;"></div>
<div class="t" style="left:913.0px;top:349.0px;font-size:26px;letter-spacing:-0.24px;color:#0b7a4b;-webkit-text-stroke:0.35px currentColor;">anti fliegenkerze</div>
<svg class="r" style="left:1106.9px;top:351.0px;" width="21" height="21" viewBox="0 0 21 21"><path d="M8 3 L4 3 Q2 3 2 5 L2 17 Q2 19 4 19 L16 19 Q18 19 18 17 L18 13" fill="none" stroke="#6b7280" stroke-width="2.6" stroke-linecap="round"/><path d="M9 12 L18.5 2.5 M12 2 L19 2 L19 9" fill="none" stroke="#6b7280" stroke-width="2.6" stroke-linecap="round" stroke-linejoin="round"/></svg>
<div class="r" style="left:920.5px;top:391.0px;width:218.0px;height:40.0px;background:#dbeafe;border:2px solid #bfdbfe;border-radius:11px;"></div>
<div class="t" style="left:938.0px;top:398.3px;font-size:24.5px;letter-spacing:0.06px;color:#1e40af;-webkit-text-stroke:0.35px currentColor;">Flammschalen</div>
<svg class="r" style="left:1112.5px;top:405.0px;" width="13" height="13" viewBox="0 0 13 13"><path d="M1 1 L12 12 M12 1 L1 12" stroke="#1e40af" stroke-width="1.8"/></svg>
<svg class="r" style="left:1151.0px;top:400.5px;" width="21" height="21" viewBox="0 0 21 21"><rect x="1.2" y="1.2" width="18.6" height="18.6" rx="3" fill="none" stroke="#6b7280" stroke-width="2.4"/><path d="M10.5 5.5 L10.5 15.5 M5.5 10.5 L15.5 10.5" stroke="#6b7280" stroke-width="2.4"/></svg>
<div class="t" style="left:1253.0px;top:376.7px;font-size:25.5px;letter-spacing:-1.51px;width:120px;text-align:center;color:#2b3950;">N/A</div>
<div class="t" style="left:1392.0px;top:376.7px;font-size:25.5px;letter-spacing:-0.19px;width:160px;text-align:center;color:#2b3950;">Watchlist</div>
<div class="r" style="left:1562.0px;top:324.0px;width:524.0px;height:136.0px;background:#fdfdfd;"></div>
<div class="r" style="left:1578.0px;top:343.0px;width:171.8px;height:30px;background:#c9dff1;filter:blur(11px);border-radius:8px;"></div>
<div class="r" style="left:1750.4px;top:343.0px;width:224.1px;height:30px;background:#c9dff1;filter:blur(11px);border-radius:8px;"></div>
<div class="r" style="left:1974.9px;top:343.0px;width:47.1px;height:30px;background:#c9dff1;filter:blur(11px);border-radius:8px;"></div>
<div class="r" style="left:1578.0px;top:376.0px;width:129.3px;height:30px;background:#c9dff1;filter:blur(11px);border-radius:8px;"></div>
<div class="r" style="left:1709.3px;top:376.0px;width:126.0px;height:30px;background:#c9dff1;filter:blur(11px);border-radius:8px;"></div>
<div class="r" style="left:1837.0px;top:376.0px;width:30.0px;height:30px;background:#c9dff1;filter:blur(11px);border-radius:8px;"></div>
<div class="r" style="left:1578px;top:409.0px;width:138.0px;height:26px;background:#c8e0d0;filter:blur(10px);border-radius:8px;"></div>
<div class="r" style="left:1728.0px;top:412.0px;width:28px;height:20px;background:#dcd8dc;filter:blur(9px);border-radius:8px;"></div>
<div class="t" style="left:2093.0px;top:376.7px;font-size:25.5px;width:40px;text-align:center;color:#2b3950;">1</div>
<div class="cell" style="left:2190.0px;top:362.0px;background:#e5e7eb;color:#2b3950;">0</div>
<div class="cell" style="left:2280.4px;top:362.0px;background:#e5e7eb;color:#2b3950;">0</div>
<div class="cell" style="left:2370.7px;top:362.0px;background:#e5e7eb;color:#2b3950;">0</div>
<div class="cell" style="left:2461.1px;top:362.0px;background:#e5e7eb;color:#2b3950;">0</div>
<div class="cell" style="left:2551.5px;top:362.0px;background:#fdb76a;color:#2b3950;">46</div>
<div class="cell" style="left:2641.8px;top:362.0px;background:#fe6666;color:#fff;-webkit-text-stroke:0.35px currentColor;">75</div>
<div class="cell" style="left:2732.2px;top:362.0px;background:#fdb76a;color:#2b3950;">44</div>
<div class="cell" style="left:2822.6px;top:362.0px;background:#fdb76a;color:#2b3950;">34</div>
<div class="cell" style="left:2913.0px;top:362.0px;background:#fdb76a;color:#2b3950;">28</div>
<div class="cell" style="left:3003.3px;top:362.0px;background:#fddf20;color:#2b3950;">15</div>
<div class="cell" style="left:3093.7px;top:362.0px;background:#fdb76a;color:#2b3950;">27</div>
<div class="cell" style="left:3184.1px;top:362.0px;background:#fddf20;color:#2b3950;">13</div>
<div class="cell" style="left:3274.4px;top:362.0px;background:#fddf20;color:#2b3950;">13</div>
<div class="cell" style="left:3364.8px;top:362.0px;background:#e5e7eb;color:#2b3950;">0</div>
<div class="cell" style="left:3455.2px;top:362.0px;background:#08de72;color:#fff;-webkit-text-stroke:0.35px currentColor;">4</div>
<div class="cell" style="left:3545.6px;top:362.0px;background:#00a33b;color:#fff;-webkit-text-stroke:0.35px currentColor;">1</div>
<div class="cell" style="left:3635.9px;top:362.0px;background:#00a33b;color:#fff;-webkit-text-stroke:0.35px currentColor;">1</div>
<div class="cell" style="left:3726.3px;top:362.0px;background:#00a33b;color:#fff;-webkit-text-stroke:0.35px currentColor;">1</div>
<div class="cell" style="left:3816.7px;top:362.0px;background:#00a33b;color:#fff;-webkit-text-stroke:0.35px currentColor;">1</div>
<svg class="r" style="left:3924.0px;top:376.0px;" width="28" height="28" viewBox="0 0 28 28"><circle cx="14" cy="14" r="14" fill="#6b7280"/><rect x="12.3" y="6" width="3.4" height="10" rx="1.5" fill="#fff"/><circle cx="14" cy="20.5" r="2" fill="#fff"/></svg>
<svg class="r" style="left:3976.0px;top:378.0px;" width="28" height="25" viewBox="0 0 28 25"><path d="M2 1.5 L2 23 L27 23" fill="none" stroke="#6b7280" stroke-width="3" stroke-linecap="round"/><path d="M7 16 L13 9 L17 13 L25 5" fill="none" stroke="#6b7280" stroke-width="3" stroke-linecap="round" stroke-linejoin="round"/></svg>
<svg class="r" style="left:4027.0px;top:376.0px;" width="24" height="29" viewBox="0 0 24 29"><path d="M1.5 6 L22.5 6" stroke="#6b7280" stroke-width="2.6" stroke-linecap="round"/><path d="M8 6 L8 2.5 Q8 1.3 9.2 1.3 L14.8 1.3 Q16 1.3 16 2.5 L16 6" fill="none" stroke="#6b7280" stroke-width="2.4"/><path d="M3.5 6 L4.5 26 Q4.6 27.7 6.3 27.7 L17.7 27.7 Q19.4 27.7 19.5 26 L20.5 6" fill="none" stroke="#6b7280" stroke-width="2.6"/><path d="M9 11 L9 23 M12 11 L12 23 M15 11 L15 23" stroke="#6b7280" stroke-width="2"/></svg>
<div class="r" style="left:514.0px;top:596.0px;width:3596.0px;height:2.0px;background:#e5e7eb;"></div>
<div class="r" style="left:539.0px;top:507.5px;width:31.0px;height:31.0px;border:2px solid #d1d5db;border-radius:7px;background:#fff;"></div>
<div class="r" style="left:618.0px;top:517.0px;width:30.0px;height:22.0px;background:linear-gradient(#000 0 7px,#dd0000 7px 14.5px,#ffce00 14.5px);box-shadow:0 2px 3px rgba(0,0,0,0.12);"></div>
<div class="t" style="left:669.5px;top:515.3px;font-size:24.5px;color:#2b3950;">DE</div>
<div class="r" style="left:811px;top:512.0px;width:24px;height:24px;border:2.2px solid #4b5563;border-radius:50%;"></div>
<div class="t" style="left:913.0px;top:487.0px;font-size:26px;letter-spacing:-0.25px;color:#0b7a4b;-webkit-text-stroke:0.35px currentColor;">anti gelsen kerze</div>
<svg class="r" style="left:1114.0px;top:489.0px;" width="21" height="21" viewBox="0 0 21 21"><path d="M8 3 L4 3 Q2 3 2 5 L2 17 Q2 19 4 19 L16 19 Q18 19 18 17 L18 13" fill="none" stroke="#6b7280" stroke-width="2.6" stroke-linecap="round"/><path d="M9 12 L18.5 2.5 M12 2 L19 2 L19 9" fill="none" stroke="#6b7280" stroke-width="2.6" stroke-linecap="round" stroke-linejoin="round"/></svg>
<div class="r" style="left:920.5px;top:529.0px;width:218.0px;height:40.0px;background:#dbeafe;border:2px solid #bfdbfe;border-radius:11px;"></div>
<div class="t" style="left:938.0px;top:536.3px;font-size:24.5px;letter-spacing:0.06px;color:#1e40af;-webkit-text-stroke:0.35px currentColor;">Flammschalen</div>
<svg class="r" style="left:1112.5px;top:543.0px;" width="13" height="13" viewBox="0 0 13 13"><path d="M1 1 L12 12 M12 1 L1 12" stroke="#1e40af" stroke-width="1.8"/></svg>
<svg class="r" style="left:1151.0px;top:538.5px;" width="21" height="21" viewBox="0 0 21 21"><rect x="1.2" y="1.2" width="18.6" height="18.6" rx="3" fill="none" stroke="#6b7280" stroke-width="2.4"/><path d="M10.5 5.5 L10.5 15.5 M5.5 10.5 L15.5 10.5" stroke="#6b7280" stroke-width="2.4"/></svg>
<div class="t" style="left:1253.0px;top:514.7px;font-size:25.5px;letter-spacing:-1.51px;width:120px;text-align:center;color:#2b3950;">N/A</div>
<div class="t" style="left:1392.0px;top:514.7px;font-size:25.5px;letter-spacing:-0.19px;width:160px;text-align:center;color:#2b3950;">Watchlist</div>
<div class="r" style="left:1562.0px;top:458.0px;width:524.0px;height:140.0px;background:#fdfdfd;"></div>
<div class="r" style="left:1578.0px;top:481.0px;width:187.9px;height:30px;background:#c9dff1;filter:blur(11px);border-radius:8px;"></div>
<div class="r" style="left:1769.2px;top:481.0px;width:139.8px;height:30px;background:#c9dff1;filter:blur(11px);border-radius:8px;"></div>
<div class="r" style="left:1909.9px;top:481.0px;width:109.1px;height:30px;background:#c9dff1;filter:blur(11px);border-radius:8px;"></div>
<div class="r" style="left:1578.0px;top:514.0px;width:212.3px;height:30px;background:#c9dff1;filter:blur(11px);border-radius:8px;"></div>
<div class="r" style="left:1791.9px;top:514.0px;width:183.1px;height:30px;background:#c9dff1;filter:blur(11px);border-radius:8px;"></div>
<div class="r" style="left:1578px;top:547.0px;width:142.0px;height:26px;background:#c8e0d0;filter:blur(10px);border-radius:8px;"></div>
<div class="r" style="left:1732.0px;top:550.0px;width:28px;height:20px;background:#dcd8dc;filter:blur(9px);border-radius:8px;"></div>
<div class="t" style="left:2093.0px;top:514.7px;font-size:25.5px;width:40px;text-align:center;color:#2b3950;">1</div>
<div class="cell" style="left:2190.0px;top:500.0px;background:#e5e7eb;color:#2b3950;">0</div>
<div class="cell" style="left:2280.4px;top:500.0px;background:#e5e7eb;color:#2b3950;">0</div>
<div class="cell" style="left:2370.7px;top:500.0px;background:#e5e7eb;color:#2b3950;">0</div>
<div class="cell" style="left:2461.1px;top:500.0px;background:#e5e7eb;color:#2b3950;">0</div>
<div class="cell" style="left:2551.5px;top:500.0px;background:#fe6666;color:#fff;-webkit-text-stroke:0.35px currentColor;">55</div>
<div class="cell" style="left:2641.8px;top:500.0px;background:#08de72;color:#fff;-webkit-text-stroke:0.35px currentColor;">8</div>
<div class="cell" style="left:2732.2px;top:500.0px;background:#00a33b;color:#fff;-webkit-text-stroke:0.35px currentColor;">1</div>
<div class="cell" style="left:2822.6px;top:500.0px;background:#00a33b;color:#fff;-webkit-text-stroke:0.35px currentColor;">1</div>
<div class="cell" style="left:2913.0px;top:500.0px;background:#00a33b;color:#fff;-webkit-text-stroke:0.35px currentColor;">1</div>
<div class="cell" style="left:3003.3px;top:500.0px;background:#00a33b;color:#fff;-webkit-text-stroke:0.35px currentColor;">1</div>
<div class="cell" style="left:3093.7px;top:500.0px;background:#00a33b;color:#fff;-webkit-text-stroke:0.35px currentColor;">1</div>
<div class="cell" style="left:3184.1px;top:500.0px;background:#00a33b;color:#fff;-webkit-text-stroke:0.35px currentColor;">2</div>
<div class="cell" style="left:3274.4px;top:500.0px;background:#00a33b;color:#fff;-webkit-text-stroke:0.35px currentColor;">1</div>
<div class="cell" style="left:3364.8px;top:500.0px;background:#e5e7eb;color:#2b3950;">0</div>
<div class="cell" style="left:3455.2px;top:500.0px;background:#00a33b;color:#fff;-webkit-text-stroke:0.35px currentColor;">1</div>
<div class="cell" style="left:3545.6px;top:500.0px;background:#00a33b;color:#fff;-webkit-text-stroke:0.35px currentColor;">1</div>
<div class="cell" style="left:3635.9px;top:500.0px;background:#00a33b;color:#fff;-webkit-text-stroke:0.35px currentColor;">1</div>
<div class="cell" style="left:3726.3px;top:500.0px;background:#00a33b;color:#fff;-webkit-text-stroke:0.35px currentColor;">1</div>
<div class="cell" style="left:3816.7px;top:500.0px;background:#00a33b;color:#fff;-webkit-text-stroke:0.35px currentColor;">1</div>
<svg class="r" style="left:3924.0px;top:514.0px;" width="28" height="28" viewBox="0 0 28 28"><circle cx="14" cy="14" r="14" fill="#6b7280"/><rect x="12.3" y="6" width="3.4" height="10" rx="1.5" fill="#fff"/><circle cx="14" cy="20.5" r="2" fill="#fff"/></svg>
<svg class="r" style="left:3976.0px;top:516.0px;" width="28" height="25" viewBox="0 0 28 25"><path d="M2 1.5 L2 23 L27 23" fill="none" stroke="#6b7280" stroke-width="3" stroke-linecap="round"/><path d="M7 16 L13 9 L17 13 L25 5" fill="none" stroke="#6b7280" stroke-width="3" stroke-linecap="round" stroke-linejoin="round"/></svg>
<svg class="r" style="left:4027.0px;top:514.0px;" width="24" height="29" viewBox="0 0 24 29"><path d="M1.5 6 L22.5 6" stroke="#6b7280" stroke-width="2.6" stroke-linecap="round"/><path d="M8 6 L8 2.5 Q8 1.3 9.2 1.3 L14.8 1.3 Q16 1.3 16 2.5 L16 6" fill="none" stroke="#6b7280" stroke-width="2.4"/><path d="M3.5 6 L4.5 26 Q4.6 27.7 6.3 27.7 L17.7 27.7 Q19.4 27.7 19.5 26 L20.5 6" fill="none" stroke="#6b7280" stroke-width="2.6"/><path d="M9 11 L9 23 M12 11 L12 23 M15 11 L15 23" stroke="#6b7280" stroke-width="2"/></svg>
<div class="r" style="left:514.0px;top:734.0px;width:3596.0px;height:2.0px;background:#e5e7eb;"></div>
<div class="r" style="left:539.0px;top:645.5px;width:31.0px;height:31.0px;border:2px solid #d1d5db;border-radius:7px;background:#fff;"></div>
<div class="r" style="left:618.0px;top:655.0px;width:30.0px;height:22.0px;background:linear-gradient(#000 0 7px,#dd0000 7px 14.5px,#ffce00 14.5px);box-shadow:0 2px 3px rgba(0,0,0,0.12);"></div>
<div class="t" style="left:669.5px;top:653.3px;font-size:24.5px;color:#2b3950;">DE</div>
<div class="r" style="left:811px;top:650.0px;width:24px;height:24px;border:2.2px solid #4b5563;border-radius:50%;"></div>
<div class="t" style="left:913.0px;top:625.0px;font-size:26px;letter-spacing:-0.25px;color:#0b7a4b;-webkit-text-stroke:0.35px currentColor;">anti gelsen kerzen</div>
<svg class="r" style="left:1128.1px;top:627.0px;" width="21" height="21" viewBox="0 0 21 21"><path d="M8 3 L4 3 Q2 3 2 5 L2 17 Q2 19 4 19 L16 19 Q18 19 18 17 L18 13" fill="none" stroke="#6b7280" stroke-width="2.6" stroke-linecap="round"/><path d="M9 12 L18.5 2.5 M12 2 L19 2 L19 9" fill="none" stroke="#6b7280" stroke-width="2.6" stroke-linecap="round" stroke-linejoin="round"/></svg>
<div class="r" style="left:920.5px;top:667.0px;width:218.0px;height:40.0px;background:#dbeafe;border:2px solid #bfdbfe;border-radius:11px;"></div>
<div class="t" style="left:938.0px;top:674.3px;font-size:24.5px;letter-spacing:0.06px;color:#1e40af;-webkit-text-stroke:0.35px currentColor;">Flammschalen</div>
<svg class="r" style="left:1112.5px;top:681.0px;" width="13" height="13" viewBox="0 0 13 13"><path d="M1 1 L12 12 M12 1 L1 12" stroke="#1e40af" stroke-width="1.8"/></svg>
<svg class="r" style="left:1151.0px;top:676.5px;" width="21" height="21" viewBox="0 0 21 21"><rect x="1.2" y="1.2" width="18.6" height="18.6" rx="3" fill="none" stroke="#6b7280" stroke-width="2.4"/><path d="M10.5 5.5 L10.5 15.5 M5.5 10.5 L15.5 10.5" stroke="#6b7280" stroke-width="2.4"/></svg>
<div class="t" style="left:1253.0px;top:652.7px;font-size:25.5px;letter-spacing:-1.51px;width:120px;text-align:center;color:#2b3950;">N/A</div>
<div class="t" style="left:1392.0px;top:652.7px;font-size:25.5px;letter-spacing:-0.19px;width:160px;text-align:center;color:#2b3950;">Watchlist</div>
<div class="r" style="left:1562.0px;top:596.0px;width:524.0px;height:140.0px;background:#fdfdfd;"></div>
<div class="r" style="left:1578.0px;top:619.0px;width:257.4px;height:30px;background:#c9dff1;filter:blur(11px);border-radius:8px;"></div>
<div class="r" style="left:1836.5px;top:619.0px;width:143.1px;height:30px;background:#c9dff1;filter:blur(11px);border-radius:8px;"></div>
<div class="r" style="left:1980.1px;top:619.0px;width:42.9px;height:30px;background:#c9dff1;filter:blur(11px);border-radius:8px;"></div>
<div class="r" style="left:1578.0px;top:652.0px;width:148.9px;height:30px;background:#c9dff1;filter:blur(11px);border-radius:8px;"></div>
<div class="r" style="left:1729.2px;top:652.0px;width:218.8px;height:30px;background:#c9dff1;filter:blur(11px);border-radius:8px;"></div>
<div class="r" style="left:1578px;top:685.0px;width:134.0px;height:26px;background:#c8e0d0;filter:blur(10px);border-radius:8px;"></div>
<div class="r" style="left:1724.0px;top:688.0px;width:28px;height:20px;background:#dcd8dc;filter:blur(9px);border-radius:8px;"></div>
<div class="t" style="left:2093.0px;top:652.7px;font-size:25.5px;width:40px;text-align:center;color:#2b3950;">1</div>
<div class="cell" style="left:2190.0px;top:638.0px;background:#e5e7eb;color:#2b3950;">0</div>
<div class="cell" style="left:2280.4px;top:638.0px;background:#e5e7eb;color:#2b3950;">0</div>
<div class="cell" style="left:2370.7px;top:638.0px;background:#e5e7eb;color:#2b3950;">0</div>
<div class="cell" style="left:2461.1px;top:638.0px;background:#e5e7eb;color:#2b3950;">0</div>
<div class="cell" style="left:2551.5px;top:638.0px;background:#fe6666;color:#fff;-webkit-text-stroke:0.35px currentColor;">69</div>
<div class="cell" style="left:2641.8px;top:638.0px;background:#fdb76a;color:#2b3950;">26</div>
<div class="cell" style="left:2732.2px;top:638.0px;background:#00a33b;color:#fff;-webkit-text-stroke:0.35px currentColor;">3</div>
<div class="cell" style="left:2822.6px;top:638.0px;background:#08de72;color:#fff;-webkit-text-stroke:0.35px currentColor;">4</div>
<div class="cell" style="left:2913.0px;top:638.0px;background:#08de72;color:#fff;-webkit-text-stroke:0.35px currentColor;">6</div>
<div class="cell" style="left:3003.3px;top:638.0px;background:#08de72;color:#fff;-webkit-text-stroke:0.35px currentColor;">4</div>
<div class="cell" style="left:3093.7px;top:638.0px;background:#08de72;color:#fff;-webkit-text-stroke:0.35px currentColor;">8</div>
<div class="cell" style="left:3184.1px;top:638.0px;background:#08de72;color:#fff;-webkit-text-stroke:0.35px currentColor;">7</div>
<div class="cell" style="left:3274.4px;top:638.0px;background:#08de72;color:#fff;-webkit-text-stroke:0.35px currentColor;">4</div>
<div class="cell" style="left:3364.8px;top:638.0px;background:#08de72;color:#fff;-webkit-text-stroke:0.35px currentColor;">5</div>
<div class="cell" style="left:3455.2px;top:638.0px;background:#08de72;color:#fff;-webkit-text-stroke:0.35px currentColor;">5</div>
<div class="cell" style="left:3545.6px;top:638.0px;background:#00a33b;color:#fff;-webkit-text-stroke:0.35px currentColor;">2</div>
<div class="cell" style="left:3635.9px;top:638.0px;background:#00a33b;color:#fff;-webkit-text-stroke:0.35px currentColor;">2</div>
<div class="cell" style="left:3726.3px;top:638.0px;background:#00a33b;color:#fff;-webkit-text-stroke:0.35px currentColor;">2</div>
<div class="cell" style="left:3816.7px;top:638.0px;background:#00a33b;color:#fff;-webkit-text-stroke:0.35px currentColor;">1</div>
<svg class="r" style="left:3924.0px;top:652.0px;" width="28" height="28" viewBox="0 0 28 28"><circle cx="14" cy="14" r="14" fill="#6b7280"/><rect x="12.3" y="6" width="3.4" height="10" rx="1.5" fill="#fff"/><circle cx="14" cy="20.5" r="2" fill="#fff"/></svg>
<svg class="r" style="left:3976.0px;top:654.0px;" width="28" height="25" viewBox="0 0 28 25"><path d="M2 1.5 L2 23 L27 23" fill="none" stroke="#6b7280" stroke-width="3" stroke-linecap="round"/><path d="M7 16 L13 9 L17 13 L25 5" fill="none" stroke="#6b7280" stroke-width="3" stroke-linecap="round" stroke-linejoin="round"/></svg>
<svg class="r" style="left:4027.0px;top:652.0px;" width="24" height="29" viewBox="0 0 24 29"><path d="M1.5 6 L22.5 6" stroke="#6b7280" stroke-width="2.6" stroke-linecap="round"/><path d="M8 6 L8 2.5 Q8 1.3 9.2 1.3 L14.8 1.3 Q16 1.3 16 2.5 L16 6" fill="none" stroke="#6b7280" stroke-width="2.4"/><path d="M3.5 6 L4.5 26 Q4.6 27.7 6.3 27.7 L17.7 27.7 Q19.4 27.7 19.5 26 L20.5 6" fill="none" stroke="#6b7280" stroke-width="2.6"/><path d="M9 11 L9 23 M12 11 L12 23 M15 11 L15 23" stroke="#6b7280" stroke-width="2"/></svg>
<div class="r" style="left:514.0px;top:872.0px;width:3596.0px;height:2.0px;background:#e5e7eb;"></div>
<div class="r" style="left:539.0px;top:783.5px;width:31.0px;height:31.0px;border:2px solid #d1d5db;border-radius:7px;background:#fff;"></div>
<div class="r" style="left:618.0px;top:793.0px;width:30.0px;height:22.0px;background:linear-gradient(#000 0 7px,#dd0000 7px 14.5px,#ffce00 14.5px);box-shadow:0 2px 3px rgba(0,0,0,0.12);"></div>
<div class="t" style="left:669.5px;top:791.3px;font-size:24.5px;color:#2b3950;">DE</div>
<div class="r" style="left:811px;top:788.0px;width:24px;height:24px;border:2.2px solid #4b5563;border-radius:50%;"></div>
<div class="t" style="left:913.0px;top:763.0px;font-size:26px;letter-spacing:-0.27px;color:#0b7a4b;-webkit-text-stroke:0.35px currentColor;">anti wespen kerzen</div>
<svg class="r" style="left:1140.9px;top:765.0px;" width="21" height="21" viewBox="0 0 21 21"><path d="M8 3 L4 3 Q2 3 2 5 L2 17 Q2 19 4 19 L16 19 Q18 19 18 17 L18 13" fill="none" stroke="#6b7280" stroke-width="2.6" stroke-linecap="round"/><path d="M9 12 L18.5 2.5 M12 2 L19 2 L19 9" fill="none" stroke="#6b7280" stroke-width="2.6" stroke-linecap="round" stroke-linejoin="round"/></svg>
<div class="r" style="left:920.5px;top:805.0px;width:218.0px;height:40.0px;background:#dbeafe;border:2px solid #bfdbfe;border-radius:11px;"></div>
<div class="t" style="left:938.0px;top:812.3px;font-size:24.5px;letter-spacing:0.06px;color:#1e40af;-webkit-text-stroke:0.35px currentColor;">Flammschalen</div>
<svg class="r" style="left:1112.5px;top:819.0px;" width="13" height="13" viewBox="0 0 13 13"><path d="M1 1 L12 12 M12 1 L1 12" stroke="#1e40af" stroke-width="1.8"/></svg>
<svg class="r" style="left:1151.0px;top:814.5px;" width="21" height="21" viewBox="0 0 21 21"><rect x="1.2" y="1.2" width="18.6" height="18.6" rx="3" fill="none" stroke="#6b7280" stroke-width="2.4"/><path d="M10.5 5.5 L10.5 15.5 M5.5 10.5 L15.5 10.5" stroke="#6b7280" stroke-width="2.4"/></svg>
<div class="t" style="left:1253.0px;top:790.7px;font-size:25.5px;letter-spacing:-1.51px;width:120px;text-align:center;color:#2b3950;">N/A</div>
<div class="t" style="left:1392.0px;top:790.7px;font-size:25.5px;letter-spacing:-0.19px;width:160px;text-align:center;color:#2b3950;">Watchlist</div>
<div class="r" style="left:1562.0px;top:734.0px;width:524.0px;height:140.0px;background:#fdfdfd;"></div>
<div class="r" style="left:1578.0px;top:757.0px;width:207.6px;height:30px;background:#c9dff1;filter:blur(11px);border-radius:8px;"></div>
<div class="r" style="left:1785.9px;top:757.0px;width:129.5px;height:30px;background:#c9dff1;filter:blur(11px);border-radius:8px;"></div>
<div class="r" style="left:1916.3px;top:757.0px;width:71.7px;height:30px;background:#c9dff1;filter:blur(11px);border-radius:8px;"></div>
<div class="r" style="left:1578.0px;top:790.0px;width:170.3px;height:30px;background:#c9dff1;filter:blur(11px);border-radius:8px;"></div>
<div class="r" style="left:1750.6px;top:790.0px;width:192.5px;height:30px;background:#c9dff1;filter:blur(11px);border-radius:8px;"></div>
<div class="r" style="left:1944.3px;top:790.0px;width:50.7px;height:30px;background:#c9dff1;filter:blur(11px);border-radius:8px;"></div>
<div class="r" style="left:1578px;top:823.0px;width:138.0px;height:26px;background:#c8e0d0;filter:blur(10px);border-radius:8px;"></div>
<div class="r" style="left:1728.0px;top:826.0px;width:28px;height:20px;background:#dcd8dc;filter:blur(9px);border-radius:8px;"></div>
<div class="t" style="left:2093.0px;top:790.7px;font-size:25.5px;width:40px;text-align:center;color:#2b3950;">1</div>
<div class="cell" style="left:2190.0px;top:776.0px;background:#e5e7eb;color:#2b3950;">0</div>
<div class="cell" style="left:2280.4px;top:776.0px;background:#e5e7eb;color:#2b3950;">0</div>
<div class="cell" style="left:2370.7px;top:776.0px;background:#e5e7eb;color:#2b3950;">0</div>
<div class="cell" style="left:2461.1px;top:776.0px;background:#e5e7eb;color:#2b3950;">0</div>
<div class="cell" style="left:2551.5px;top:776.0px;background:#08de72;color:#fff;-webkit-text-stroke:0.35px currentColor;">10</div>
<div class="cell" style="left:2641.8px;top:776.0px;background:#00a33b;color:#fff;-webkit-text-stroke:0.35px currentColor;">3</div>
<div class="cell" style="left:2732.2px;top:776.0px;background:#00a33b;color:#fff;-webkit-text-stroke:0.35px currentColor;">1</div>
<div class="cell" style="left:2822.6px;top:776.0px;background:#00a33b;color:#fff;-webkit-text-stroke:0.35px currentColor;">1</div>
<div class="cell" style="left:2913.0px;top:776.0px;background:#00a33b;color:#fff;-webkit-text-stroke:0.35px currentColor;">1</div>
<div class="cell" style="left:3003.3px;top:776.0px;background:#00a33b;color:#fff;-webkit-text-stroke:0.35px currentColor;">1</div>
<div class="cell" style="left:3093.7px;top:776.0px;background:#00a33b;color:#fff;-webkit-text-stroke:0.35px currentColor;">1</div>
<div class="cell" style="left:3184.1px;top:776.0px;background:#00a33b;color:#fff;-webkit-text-stroke:0.35px currentColor;">1</div>
<div class="cell" style="left:3274.4px;top:776.0px;background:#00a33b;color:#fff;-webkit-text-stroke:0.35px currentColor;">1</div>
<div class="cell" style="left:3364.8px;top:776.0px;background:#00a33b;color:#fff;-webkit-text-stroke:0.35px currentColor;">2</div>
<div class="cell" style="left:3455.2px;top:776.0px;background:#fdb76a;color:#2b3950;">32</div>
<div class="cell" style="left:3545.6px;top:776.0px;background:#08de72;color:#fff;-webkit-text-stroke:0.35px currentColor;">4</div>
<div class="cell" style="left:3635.9px;top:776.0px;background:#00a33b;color:#fff;-webkit-text-stroke:0.35px currentColor;">2</div>
<div class="cell" style="left:3726.3px;top:776.0px;background:#00a33b;color:#fff;-webkit-text-stroke:0.35px currentColor;">1</div>
<div class="cell" style="left:3816.7px;top:776.0px;background:#e5e7eb;color:#2b3950;">0</div>
<svg class="r" style="left:3924.0px;top:790.0px;" width="28" height="28" viewBox="0 0 28 28"><circle cx="14" cy="14" r="14" fill="#6b7280"/><rect x="12.3" y="6" width="3.4" height="10" rx="1.5" fill="#fff"/><circle cx="14" cy="20.5" r="2" fill="#fff"/></svg>
<svg class="r" style="left:3976.0px;top:792.0px;" width="28" height="25" viewBox="0 0 28 25"><path d="M2 1.5 L2 23 L27 23" fill="none" stroke="#6b7280" stroke-width="3" stroke-linecap="round"/><path d="M7 16 L13 9 L17 13 L25 5" fill="none" stroke="#6b7280" stroke-width="3" stroke-linecap="round" stroke-linejoin="round"/></svg>
<svg class="r" style="left:4027.0px;top:790.0px;" width="24" height="29" viewBox="0 0 24 29"><path d="M1.5 6 L22.5 6" stroke="#6b7280" stroke-width="2.6" stroke-linecap="round"/><path d="M8 6 L8 2.5 Q8 1.3 9.2 1.3 L14.8 1.3 Q16 1.3 16 2.5 L16 6" fill="none" stroke="#6b7280" stroke-width="2.4"/><path d="M3.5 6 L4.5 26 Q4.6 27.7 6.3 27.7 L17.7 27.7 Q19.4 27.7 19.5 26 L20.5 6" fill="none" stroke="#6b7280" stroke-width="2.6"/><path d="M9 11 L9 23 M12 11 L12 23 M15 11 L15 23" stroke="#6b7280" stroke-width="2"/></svg>
<div class="r" style="left:514.0px;top:1010.0px;width:3596.0px;height:2.0px;background:#e5e7eb;"></div>
<div class="r" style="left:539.0px;top:921.5px;width:31.0px;height:31.0px;border:2px solid #d1d5db;border-radius:7px;background:#fff;"></div>
<div class="r" style="left:618.0px;top:931.0px;width:30.0px;height:22.0px;background:linear-gradient(#000 0 7px,#dd0000 7px 14.5px,#ffce00 14.5px);box-shadow:0 2px 3px rgba(0,0,0,0.12);"></div>
<div class="t" style="left:669.5px;top:929.3px;font-size:24.5px;color:#2b3950;">DE</div>
<div class="r" style="left:811px;top:926.0px;width:24px;height:24px;border:2.2px solid #4b5563;border-radius:50%;"></div>
<div class="t" style="left:913.0px;top:901.0px;font-size:26px;letter-spacing:-0.28px;color:#0b7a4b;-webkit-text-stroke:0.35px currentColor;">anti wespenkerze</div>
<svg class="r" style="left:1119.6px;top:903.0px;" width="21" height="21" viewBox="0 0 21 21"><path d="M8 3 L4 3 Q2 3 2 5 L2 17 Q2 19 4 19 L16 19 Q18 19 18 17 L18 13" fill="none" stroke="#6b7280" stroke-width="2.6" stroke-linecap="round"/><path d="M9 12 L18.5 2.5 M12 2 L19 2 L19 9" fill="none" stroke="#6b7280" stroke-width="2.6" stroke-linecap="round" stroke-linejoin="round"/></svg>
<div class="r" style="left:920.5px;top:943.0px;width:218.0px;height:40.0px;background:#dbeafe;border:2px solid #bfdbfe;border-radius:11px;"></div>
<div class="t" style="left:938.0px;top:950.3px;font-size:24.5px;letter-spacing:0.06px;color:#1e40af;-webkit-text-stroke:0.35px currentColor;">Flammschalen</div>
<svg class="r" style="left:1112.5px;top:957.0px;" width="13" height="13" viewBox="0 0 13 13"><path d="M1 1 L12 12 M12 1 L1 12" stroke="#1e40af" stroke-width="1.8"/></svg>
<svg class="r" style="left:1151.0px;top:952.5px;" width="21" height="21" viewBox="0 0 21 21"><rect x="1.2" y="1.2" width="18.6" height="18.6" rx="3" fill="none" stroke="#6b7280" stroke-width="2.4"/><path d="M10.5 5.5 L10.5 15.5 M5.5 10.5 L15.5 10.5" stroke="#6b7280" stroke-width="2.4"/></svg>
<div class="t" style="left:1253.0px;top:928.7px;font-size:25.5px;letter-spacing:-1.51px;width:120px;text-align:center;color:#2b3950;">N/A</div>
<div class="t" style="left:1392.0px;top:928.7px;font-size:25.5px;letter-spacing:-0.19px;width:160px;text-align:center;color:#2b3950;">Watchlist</div>
<div class="r" style="left:1562.0px;top:872.0px;width:524.0px;height:140.0px;background:#fdfdfd;"></div>
<div class="r" style="left:1578.0px;top:895.0px;width:159.1px;height:30px;background:#c9dff1;filter:blur(11px);border-radius:8px;"></div>
<div class="r" style="left:1739.4px;top:895.0px;width:204.0px;height:30px;background:#c9dff1;filter:blur(11px);border-radius:8px;"></div>
<div class="r" style="left:1946.9px;top:895.0px;width:14.1px;height:30px;background:#c9dff1;filter:blur(11px);border-radius:8px;"></div>
<div class="r" style="left:1578.0px;top:928.0px;width:276.8px;height:30px;background:#c9dff1;filter:blur(11px);border-radius:8px;"></div>
<div class="r" style="left:1855.3px;top:928.0px;width:119.7px;height:30px;background:#c9dff1;filter:blur(11px);border-radius:8px;"></div>
<div class="r" style="left:1578px;top:961.0px;width:134.0px;height:26px;background:#c8e0d0;filter:blur(10px);border-radius:8px;"></div>
<div class="r" style="left:1724.0px;top:964.0px;width:28px;height:20px;background:#dcd8dc;filter:blur(9px);border-radius:8px;"></div>
<div class="t" style="left:2093.0px;top:928.7px;font-size:25.5px;width:40px;text-align:center;color:#2b3950;">1</div>
<div class="cell" style="left:2190.0px;top:914.0px;background:#fdb76a;color:#2b3950;">40</div>
<div class="cell" style="left:2280.4px;top:914.0px;background:#fdb76a;color:#2b3950;">35</div>
<div class="cell" style="left:2370.7px;top:914.0px;background:#fdb76a;color:#2b3950;">22</div>
<div class="cell" style="left:2461.1px;top:914.0px;background:#fddf20;color:#2b3950;">17</div>
<div class="cell" style="left:2551.5px;top:914.0px;background:#08de72;color:#fff;-webkit-text-stroke:0.35px currentColor;">4</div>
<div class="cell" style="left:2641.8px;top:914.0px;background:#00a33b;color:#fff;-webkit-text-stroke:0.35px currentColor;">2</div>
<div class="cell" style="left:2732.2px;top:914.0px;background:#00a33b;color:#fff;-webkit-text-stroke:0.35px currentColor;">1</div>
<div class="cell" style="left:2822.6px;top:914.0px;background:#00a33b;color:#fff;-webkit-text-stroke:0.35px currentColor;">1</div>
<div class="cell" style="left:2913.0px;top:914.0px;background:#00a33b;color:#fff;-webkit-text-stroke:0.35px currentColor;">1</div>
<div class="cell" style="left:3003.3px;top:914.0px;background:#00a33b;color:#fff;-webkit-text-stroke:0.35px currentColor;">1</div>
<div class="cell" style="left:3093.7px;top:914.0px;background:#00a33b;color:#fff;-webkit-text-stroke:0.35px currentColor;">1</div>
<div class="cell" style="left:3184.1px;top:914.0px;background:#00a33b;color:#fff;-webkit-text-stroke:0.35px currentColor;">1</div>
<div class="cell" style="left:3274.4px;top:914.0px;background:#e5e7eb;color:#2b3950;">0</div>
<div class="cell" style="left:3364.8px;top:914.0px;background:#00a33b;color:#fff;-webkit-text-stroke:0.35px currentColor;">1</div>
<div class="cell" style="left:3455.2px;top:914.0px;background:#00a33b;color:#fff;-webkit-text-stroke:0.35px currentColor;">1</div>
<div class="cell" style="left:3545.6px;top:914.0px;background:#00a33b;color:#fff;-webkit-text-stroke:0.35px currentColor;">1</div>
<div class="cell" style="left:3635.9px;top:914.0px;background:#00a33b;color:#fff;-webkit-text-stroke:0.35px currentColor;">1</div>
<div class="cell" style="left:3726.3px;top:914.0px;background:#00a33b;color:#fff;-webkit-text-stroke:0.35px currentColor;">2</div>
<div class="cell" style="left:3816.7px;top:914.0px;background:#e5e7eb;color:#2b3950;">0</div>
<svg class="r" style="left:3924.0px;top:928.0px;" width="28" height="28" viewBox="0 0 28 28"><circle cx="14" cy="14" r="14" fill="#6b7280"/><rect x="12.3" y="6" width="3.4" height="10" rx="1.5" fill="#fff"/><circle cx="14" cy="20.5" r="2" fill="#fff"/></svg>
<svg class="r" style="left:3976.0px;top:930.0px;" width="28" height="25" viewBox="0 0 28 25"><path d="M2 1.5 L2 23 L27 23" fill="none" stroke="#6b7280" stroke-width="3" stroke-linecap="round"/><path d="M7 16 L13 9 L17 13 L25 5" fill="none" stroke="#6b7280" stroke-width="3" stroke-linecap="round" stroke-linejoin="round"/></svg>
<svg class="r" style="left:4027.0px;top:928.0px;" width="24" height="29" viewBox="0 0 24 29"><path d="M1.5 6 L22.5 6" stroke="#6b7280" stroke-width="2.6" stroke-linecap="round"/><path d="M8 6 L8 2.5 Q8 1.3 9.2 1.3 L14.8 1.3 Q16 1.3 16 2.5 L16 6" fill="none" stroke="#6b7280" stroke-width="2.4"/><path d="M3.5 6 L4.5 26 Q4.6 27.7 6.3 27.7 L17.7 27.7 Q19.4 27.7 19.5 26 L20.5 6" fill="none" stroke="#6b7280" stroke-width="2.6"/><path d="M9 11 L9 23 M12 11 L12 23 M15 11 L15 23" stroke="#6b7280" stroke-width="2"/></svg>
<div class="r" style="left:514.0px;top:1148.0px;width:3596.0px;height:2.0px;background:#e5e7eb;"></div>
<div class="r" style="left:539.0px;top:1059.5px;width:31.0px;height:31.0px;border:2px solid #d1d5db;border-radius:7px;background:#fff;"></div>
<div class="r" style="left:618.0px;top:1069.0px;width:30.0px;height:22.0px;background:linear-gradient(#000 0 7px,#dd0000 7px 14.5px,#ffce00 14.5px);box-shadow:0 2px 3px rgba(0,0,0,0.12);"></div>
<div class="t" style="left:669.5px;top:1067.3px;font-size:24.5px;color:#2b3950;">DE</div>
<div class="r" style="left:811px;top:1064.0px;width:24px;height:24px;border:2.2px solid #4b5563;border-radius:50%;"></div>
<div class="t" style="left:913.0px;top:1039.0px;font-size:26px;letter-spacing:-0.27px;color:#0b7a4b;-webkit-text-stroke:0.35px currentColor;">balkon kerze</div>
<svg class="r" style="left:1065.9px;top:1041.0px;" width="21" height="21" viewBox="0 0 21 21"><path d="M8 3 L4 3 Q2 3 2 5 L2 17 Q2 19 4 19 L16 19 Q18 19 18 17 L18 13" fill="none" stroke="#6b7280" stroke-width="2.6" stroke-linecap="round"/><path d="M9 12 L18.5 2.5 M12 2 L19 2 L19 9" fill="none" stroke="#6b7280" stroke-width="2.6" stroke-linecap="round" stroke-linejoin="round"/></svg>
<div class="r" style="left:920.5px;top:1081.0px;width:218.0px;height:40.0px;background:#dbeafe;border:2px solid #bfdbfe;border-radius:11px;"></div>
<div class="t" style="left:938.0px;top:1088.3px;font-size:24.5px;letter-spacing:0.06px;color:#1e40af;-webkit-text-stroke:0.35px currentColor;">Flammschalen</div>
<svg class="r" style="left:1112.5px;top:1095.0px;" width="13" height="13" viewBox="0 0 13 13"><path d="M1 1 L12 12 M12 1 L1 12" stroke="#1e40af" stroke-width="1.8"/></svg>
<svg class="r" style="left:1151.0px;top:1090.5px;" width="21" height="21" viewBox="0 0 21 21"><rect x="1.2" y="1.2" width="18.6" height="18.6" rx="3" fill="none" stroke="#6b7280" stroke-width="2.4"/><path d="M10.5 5.5 L10.5 15.5 M5.5 10.5 L15.5 10.5" stroke="#6b7280" stroke-width="2.4"/></svg>
<div class="t" style="left:1253.0px;top:1066.7px;font-size:25.5px;width:120px;text-align:center;color:#2b3950;">351</div>
<div class="t" style="left:1392.0px;top:1066.7px;font-size:25.5px;letter-spacing:-0.19px;width:160px;text-align:center;color:#2b3950;">Watchlist</div>
<div class="r" style="left:1562.0px;top:1010.0px;width:524.0px;height:140.0px;background:#fdfdfd;"></div>
<div class="r" style="left:1578.0px;top:1033.0px;width:144.3px;height:30px;background:#c9dff1;filter:blur(11px);border-radius:8px;"></div>
<div class="r" style="left:1724.3px;top:1033.0px;width:126.3px;height:30px;background:#c9dff1;filter:blur(11px);border-radius:8px;"></div>
<div class="r" style="left:1853.2px;top:1033.0px;width:87.8px;height:30px;background:#c9dff1;filter:blur(11px);border-radius:8px;"></div>
<div class="r" style="left:1578.0px;top:1066.0px;width:260.1px;height:30px;background:#c9dff1;filter:blur(11px);border-radius:8px;"></div>
<div class="r" style="left:1839.3px;top:1066.0px;width:168.7px;height:30px;background:#c9dff1;filter:blur(11px);border-radius:8px;"></div>
<div class="r" style="left:1578px;top:1099.0px;width:107.0px;height:26px;background:#c8e0d0;filter:blur(10px);border-radius:8px;"></div>
<div class="r" style="left:1697.0px;top:1102.0px;width:28px;height:20px;background:#dcd8dc;filter:blur(9px);border-radius:8px;"></div>
<div class="t" style="left:2093.0px;top:1066.7px;font-size:25.5px;width:40px;text-align:center;color:#2b3950;">1</div>
<div class="cell" style="left:2190.0px;top:1052.0px;background:#e5e7eb;color:#2b3950;">0</div>
<div class="cell" style="left:2280.4px;top:1052.0px;background:#e5e7eb;color:#2b3950;">0</div>
<div class="cell" style="left:2370.7px;top:1052.0px;background:#e5e7eb;color:#2b3950;">0</div>
<div class="cell" style="left:2461.1px;top:1052.0px;background:#e5e7eb;color:#2b3950;">0</div>
<div class="cell" style="left:2551.5px;top:1052.0px;background:#e5e7eb;color:#2b3950;">0</div>
<div class="cell" style="left:2641.8px;top:1052.0px;background:#fdb76a;color:#2b3950;">47</div>
<div class="cell" style="left:2732.2px;top:1052.0px;background:#08de72;color:#fff;-webkit-text-stroke:0.35px currentColor;">8</div>
<div class="cell" style="left:2822.6px;top:1052.0px;background:#00a33b;color:#fff;-webkit-text-stroke:0.35px currentColor;">1</div>
<div class="cell" style="left:2913.0px;top:1052.0px;background:#00a33b;color:#fff;-webkit-text-stroke:0.35px currentColor;">1</div>
<div class="cell" style="left:3003.3px;top:1052.0px;background:#00a33b;color:#fff;-webkit-text-stroke:0.35px currentColor;">1</div>
<div class="cell" style="left:3093.7px;top:1052.0px;background:#00a33b;color:#fff;-webkit-text-stroke:0.35px currentColor;">1</div>
<div class="cell" style="left:3184.1px;top:1052.0px;background:#00a33b;color:#fff;-webkit-text-stroke:0.35px currentColor;">1</div>
<div class="cell" style="left:3274.4px;top:1052.0px;background:#00a33b;color:#fff;-webkit-text-stroke:0.35px currentColor;">1</div>
<div class="cell" style="left:3364.8px;top:1052.0px;background:#00a33b;color:#fff;-webkit-text-stroke:0.35px currentColor;">1</div>
<div class="cell" style="left:3455.2px;top:1052.0px;background:#00a33b;color:#fff;-webkit-text-stroke:0.35px currentColor;">2</div>
<div class="cell" style="left:3545.6px;top:1052.0px;background:#00a33b;color:#fff;-webkit-text-stroke:0.35px currentColor;">2</div>
<div class="cell" style="left:3635.9px;top:1052.0px;background:#00a33b;color:#fff;-webkit-text-stroke:0.35px currentColor;">2</div>
<div class="cell" style="left:3726.3px;top:1052.0px;background:#00a33b;color:#fff;-webkit-text-stroke:0.35px currentColor;">3</div>
<div class="cell" style="left:3816.7px;top:1052.0px;background:#00a33b;color:#fff;-webkit-text-stroke:0.35px currentColor;">2</div>
<svg class="r" style="left:3924.0px;top:1066.0px;" width="28" height="28" viewBox="0 0 28 28"><circle cx="14" cy="14" r="14" fill="#6b7280"/><rect x="12.3" y="6" width="3.4" height="10" rx="1.5" fill="#fff"/><circle cx="14" cy="20.5" r="2" fill="#fff"/></svg>
<svg class="r" style="left:3976.0px;top:1068.0px;" width="28" height="25" viewBox="0 0 28 25"><path d="M2 1.5 L2 23 L27 23" fill="none" stroke="#6b7280" stroke-width="3" stroke-linecap="round"/><path d="M7 16 L13 9 L17 13 L25 5" fill="none" stroke="#6b7280" stroke-width="3" stroke-linecap="round" stroke-linejoin="round"/></svg>
<svg class="r" style="left:4027.0px;top:1066.0px;" width="24" height="29" viewBox="0 0 24 29"><path d="M1.5 6 L22.5 6" stroke="#6b7280" stroke-width="2.6" stroke-linecap="round"/><path d="M8 6 L8 2.5 Q8 1.3 9.2 1.3 L14.8 1.3 Q16 1.3 16 2.5 L16 6" fill="none" stroke="#6b7280" stroke-width="2.4"/><path d="M3.5 6 L4.5 26 Q4.6 27.7 6.3 27.7 L17.7 27.7 Q19.4 27.7 19.5 26 L20.5 6" fill="none" stroke="#6b7280" stroke-width="2.6"/><path d="M9 11 L9 23 M12 11 L12 23 M15 11 L15 23" stroke="#6b7280" stroke-width="2"/></svg>
<div class="r" style="left:514.0px;top:1286.0px;width:3596.0px;height:2.0px;background:#e5e7eb;"></div>
<div class="r" style="left:539.0px;top:1197.5px;width:31.0px;height:31.0px;border:2px solid #d1d5db;border-radius:7px;background:#fff;"></div>
<div class="r" style="left:618.0px;top:1207.0px;width:30.0px;height:22.0px;background:linear-gradient(#000 0 7px,#dd0000 7px 14.5px,#ffce00 14.5px);box-shadow:0 2px 3px rgba(0,0,0,0.12);"></div>
<div class="t" style="left:669.5px;top:1205.3px;font-size:24.5px;color:#2b3950;">DE</div>
<div class="r" style="left:811px;top:1202.0px;width:24px;height:24px;border:2.2px solid #4b5563;border-radius:50%;"></div>
<div class="t" style="left:913.0px;top:1177.0px;font-size:26px;letter-spacing:-0.28px;color:#0b7a4b;-webkit-text-stroke:0.35px currentColor;">circlemaps</div>
<svg class="r" style="left:1043.2px;top:1179.0px;" width="21" height="21" viewBox="0 0 21 21"><path d="M8 3 L4 3 Q2 3 2 5 L2 17 Q2 19 4 19 L16 19 Q18 19 18 17 L18 13" fill="none" stroke="#6b7280" stroke-width="2.6" stroke-linecap="round"/><path d="M9 12 L18.5 2.5 M12 2 L19 2 L19 9" fill="none" stroke="#6b7280" stroke-width="2.6" stroke-linecap="round" stroke-linejoin="round"/></svg>
<div class="r" style="left:920.5px;top:1219.0px;width:171.0px;height:40.0px;background:#dbeafe;border:2px solid #bfdbfe;border-radius:11px;"></div>
<div class="t" style="left:938.0px;top:1226.3px;font-size:24.5px;color:#1e40af;-webkit-text-stroke:0.35px currentColor;">circle map</div>
<svg class="r" style="left:1065.5px;top:1233.0px;" width="13" height="13" viewBox="0 0 13 13"><path d="M1 1 L12 12 M12 1 L1 12" stroke="#1e40af" stroke-width="1.8"/></svg>
<svg class="r" style="left:1104.0px;top:1228.5px;" width="21" height="21" viewBox="0 0 21 21"><rect x="1.2" y="1.2" width="18.6" height="18.6" rx="3" fill="none" stroke="#6b7280" stroke-width="2.4"/><path d="M10.5 5.5 L10.5 15.5 M5.5 10.5 L15.5 10.5" stroke="#6b7280" stroke-width="2.4"/></svg>
<div class="t" style="left:1253.0px;top:1204.7px;font-size:25.5px;width:120px;text-align:center;color:#2b3950;">1</div>
<div class="t" style="left:1392.0px;top:1204.7px;font-size:25.5px;width:160px;text-align:center;color:#2b3950;">Seller</div>
<div class="r" style="left:1562.0px;top:1148.0px;width:524.0px;height:140.0px;background:#fdfdfd;"></div>
<div class="r" style="left:1578.0px;top:1171.0px;width:212.8px;height:30px;background:#c9dff1;filter:blur(11px);border-radius:8px;"></div>
<div class="r" style="left:1792.6px;top:1171.0px;width:182.4px;height:30px;background:#c9dff1;filter:blur(11px);border-radius:8px;"></div>
<div class="r" style="left:1578.0px;top:1204.0px;width:195.9px;height:30px;background:#c9dff1;filter:blur(11px);border-radius:8px;"></div>
<div class="r" style="left:1776.5px;top:1204.0px;width:129.7px;height:30px;background:#c9dff1;filter:blur(11px);border-radius:8px;"></div>
<div class="r" style="left:1909.0px;top:1204.0px;width:86.0px;height:30px;background:#c9dff1;filter:blur(11px);border-radius:8px;"></div>
<div class="r" style="left:1578px;top:1237.0px;width:161.0px;height:26px;background:#c8e0d0;filter:blur(10px);border-radius:8px;"></div>
<div class="r" style="left:1751.0px;top:1240.0px;width:28px;height:20px;background:#dcd8dc;filter:blur(9px);border-radius:8px;"></div>
<div class="t" style="left:2093.0px;top:1204.7px;font-size:25.5px;width:40px;text-align:center;color:#2b3950;">1</div>
<div class="cell" style="left:2190.0px;top:1190.0px;background:#00a33b;color:#fff;-webkit-text-stroke:0.35px currentColor;">1</div>
<div class="cell" style="left:2280.4px;top:1190.0px;background:#00a33b;color:#fff;-webkit-text-stroke:0.35px currentColor;">1</div>
<div class="cell" style="left:2370.7px;top:1190.0px;background:#00a33b;color:#fff;-webkit-text-stroke:0.35px currentColor;">1</div>
<div class="cell" style="left:2461.1px;top:1190.0px;background:#00a33b;color:#fff;-webkit-text-stroke:0.35px currentColor;">1</div>
<div class="cell" style="left:2551.5px;top:1190.0px;background:#00a33b;color:#fff;-webkit-text-stroke:0.35px currentColor;">1</div>
<div class="cell" style="left:2641.8px;top:1190.0px;background:#00a33b;color:#fff;-webkit-text-stroke:0.35px currentColor;">1</div>
<div class="cell" style="left:2732.2px;top:1190.0px;background:#00a33b;color:#fff;-webkit-text-stroke:0.35px currentColor;">1</div>
<div class="cell" style="left:2822.6px;top:1190.0px;background:#00a33b;color:#fff;-webkit-text-stroke:0.35px currentColor;">1</div>
<div class="cell" style="left:2913.0px;top:1190.0px;background:#00a33b;color:#fff;-webkit-text-stroke:0.35px currentColor;">1</div>
<div class="cell" style="left:3003.3px;top:1190.0px;background:#00a33b;color:#fff;-webkit-text-stroke:0.35px currentColor;">1</div>
<div class="cell" style="left:3093.7px;top:1190.0px;background:#00a33b;color:#fff;-webkit-text-stroke:0.35px currentColor;">1</div>
<div class="cell" style="left:3184.1px;top:1190.0px;background:#e5e7eb;color:#2b3950;">0</div>
<div class="cell" style="left:3274.4px;top:1190.0px;background:#00a33b;color:#fff;-webkit-text-stroke:0.35px currentColor;">1</div>
<div class="cell" style="left:3364.8px;top:1190.0px;background:#00a33b;color:#fff;-webkit-text-stroke:0.35px currentColor;">1</div>
<div class="cell" style="left:3455.2px;top:1190.0px;background:#00a33b;color:#fff;-webkit-text-stroke:0.35px currentColor;">1</div>
<div class="cell" style="left:3545.6px;top:1190.0px;background:#00a33b;color:#fff;-webkit-text-stroke:0.35px currentColor;">1</div>
<div class="cell" style="left:3635.9px;top:1190.0px;background:#00a33b;color:#fff;-webkit-text-stroke:0.35px currentColor;">1</div>
<div class="cell" style="left:3726.3px;top:1190.0px;background:#00a33b;color:#fff;-webkit-text-stroke:0.35px currentColor;">1</div>
<div class="cell" style="left:3816.7px;top:1190.0px;background:#00a33b;color:#fff;-webkit-text-stroke:0.35px currentColor;">1</div>
<svg class="r" style="left:3924.0px;top:1204.0px;" width="28" height="28" viewBox="0 0 28 28"><circle cx="14" cy="14" r="14" fill="#6b7280"/><rect x="12.3" y="6" width="3.4" height="10" rx="1.5" fill="#fff"/><circle cx="14" cy="20.5" r="2" fill="#fff"/></svg>
<svg class="r" style="left:3976.0px;top:1206.0px;" width="28" height="25" viewBox="0 0 28 25"><path d="M2 1.5 L2 23 L27 23" fill="none" stroke="#6b7280" stroke-width="3" stroke-linecap="round"/><path d="M7 16 L13 9 L17 13 L25 5" fill="none" stroke="#6b7280" stroke-width="3" stroke-linecap="round" stroke-linejoin="round"/></svg>
<svg class="r" style="left:4027.0px;top:1204.0px;" width="24" height="29" viewBox="0 0 24 29"><path d="M1.5 6 L22.5 6" stroke="#6b7280" stroke-width="2.6" stroke-linecap="round"/><path d="M8 6 L8 2.5 Q8 1.3 9.2 1.3 L14.8 1.3 Q16 1.3 16 2.5 L16 6" fill="none" stroke="#6b7280" stroke-width="2.4"/><path d="M3.5 6 L4.5 26 Q4.6 27.7 6.3 27.7 L17.7 27.7 Q19.4 27.7 19.5 26 L20.5 6" fill="none" stroke="#6b7280" stroke-width="2.6"/><path d="M9 11 L9 23 M12 11 L12 23 M15 11 L15 23" stroke="#6b7280" stroke-width="2"/></svg>
<div class="r" style="left:514.0px;top:1424.0px;width:3596.0px;height:2.0px;background:#e5e7eb;"></div>
<div class="r" style="left:539.0px;top:1335.5px;width:31.0px;height:31.0px;border:2px solid #d1d5db;border-radius:7px;background:#fff;"></div>
<div class="r" style="left:618.0px;top:1345.0px;width:30.0px;height:22.0px;background:linear-gradient(#000 0 7px,#dd0000 7px 14.5px,#ffce00 14.5px);box-shadow:0 2px 3px rgba(0,0,0,0.12);"></div>
<div class="t" style="left:669.5px;top:1343.3px;font-size:24.5px;color:#2b3950;">DE</div>
<div class="r" style="left:811px;top:1340.0px;width:24px;height:24px;border:2.2px solid #4b5563;border-radius:50%;"></div>
<div class="t" style="left:913.0px;top:1315.0px;font-size:26px;letter-spacing:-0.24px;color:#0b7a4b;-webkit-text-stroke:0.35px currentColor;">citronella kerzen</div>
<svg class="r" style="left:1106.9px;top:1317.0px;" width="21" height="21" viewBox="0 0 21 21"><path d="M8 3 L4 3 Q2 3 2 5 L2 17 Q2 19 4 19 L16 19 Q18 19 18 17 L18 13" fill="none" stroke="#6b7280" stroke-width="2.6" stroke-linecap="round"/><path d="M9 12 L18.5 2.5 M12 2 L19 2 L19 9" fill="none" stroke="#6b7280" stroke-width="2.6" stroke-linecap="round" stroke-linejoin="round"/></svg>
<div class="r" style="left:920.5px;top:1357.0px;width:218.0px;height:40.0px;background:#dbeafe;border:2px solid #bfdbfe;border-radius:11px;"></div>
<div class="t" style="left:938.0px;top:1364.3px;font-size:24.5px;letter-spacing:0.06px;color:#1e40af;-webkit-text-stroke:0.35px currentColor;">Flammschalen</div>
<svg class="r" style="left:1112.5px;top:1371.0px;" width="13" height="13" viewBox="0 0 13 13"><path d="M1 1 L12 12 M12 1 L1 12" stroke="#1e40af" stroke-width="1.8"/></svg>
<svg class="r" style="left:1151.0px;top:1366.5px;" width="21" height="21" viewBox="0 0 21 21"><rect x="1.2" y="1.2" width="18.6" height="18.6" rx="3" fill="none" stroke="#6b7280" stroke-width="2.4"/><path d="M10.5 5.5 L10.5 15.5 M5.5 10.5 L15.5 10.5" stroke="#6b7280" stroke-width="2.4"/></svg>
<div class="t" style="left:1253.0px;top:1342.7px;font-size:25.5px;width:120px;text-align:center;color:#2b3950;">1,868</div>
<div class="t" style="left:1392.0px;top:1342.7px;font-size:25.5px;letter-spacing:-0.19px;width:160px;text-align:center;color:#2b3950;">Watchlist</div>
<div class="r" style="left:1562.0px;top:1286.0px;width:524.0px;height:140.0px;background:#fdfdfd;"></div>
<div class="r" style="left:1578.0px;top:1309.0px;width:251.5px;height:30px;background:#c9dff1;filter:blur(11px);border-radius:8px;"></div>
<div class="r" style="left:1830.6px;top:1309.0px;width:171.4px;height:30px;background:#c9dff1;filter:blur(11px);border-radius:8px;"></div>
<div class="r" style="left:1578.0px;top:1342.0px;width:123.6px;height:30px;background:#c9dff1;filter:blur(11px);border-radius:8px;"></div>
<div class="r" style="left:1703.5px;top:1342.0px;width:146.9px;height:30px;background:#c9dff1;filter:blur(11px);border-radius:8px;"></div>
<div class="r" style="left:1850.8px;top:1342.0px;width:23.2px;height:30px;background:#c9dff1;filter:blur(11px);border-radius:8px;"></div>
<div class="r" style="left:1578px;top:1375.0px;width:148.0px;height:26px;background:#c8e0d0;filter:blur(10px);border-radius:8px;"></div>
<div class="r" style="left:1738.0px;top:1378.0px;width:28px;height:20px;background:#dcd8dc;filter:blur(9px);border-radius:8px;"></div>
<div class="t" style="left:2093.0px;top:1342.7px;font-size:25.5px;width:40px;text-align:center;color:#2b3950;">1</div>
<div class="cell" style="left:2190.0px;top:1328.0px;background:#00a33b;color:#fff;-webkit-text-stroke:0.35px currentColor;">2</div>
<div class="cell" style="left:2280.4px;top:1328.0px;background:#00a33b;color:#fff;-webkit-text-stroke:0.35px currentColor;">2</div>
<div class="cell" style="left:2370.7px;top:1328.0px;background:#00a33b;color:#fff;-webkit-text-stroke:0.35px currentColor;">3</div>
<div class="cell" style="left:2461.1px;top:1328.0px;background:#00a33b;color:#fff;-webkit-text-stroke:0.35px currentColor;">3</div>
<div class="cell" style="left:2551.5px;top:1328.0px;background:#00a33b;color:#fff;-webkit-text-stroke:0.35px currentColor;">3</div>
<div class="cell" style="left:2641.8px;top:1328.0px;background:#08de72;color:#fff;-webkit-text-stroke:0.35px currentColor;">4</div>
<div class="cell" style="left:2732.2px;top:1328.0px;background:#00a33b;color:#fff;-webkit-text-stroke:0.35px currentColor;">3</div>
<div class="cell" style="left:2822.6px;top:1328.0px;background:#00a33b;color:#fff;-webkit-text-stroke:0.35px currentColor;">2</div>
<div class="cell" style="left:2913.0px;top:1328.0px;background:#08de72;color:#fff;-webkit-text-stroke:0.35px currentColor;">7</div>
<div class="cell" style="left:3003.3px;top:1328.0px;background:#00a33b;color:#fff;-webkit-text-stroke:0.35px currentColor;">3</div>
<div class="cell" style="left:3093.7px;top:1328.0px;background:#00a33b;color:#fff;-webkit-text-stroke:0.35px currentColor;">3</div>
<div class="cell" style="left:3184.1px;top:1328.0px;background:#fddf20;color:#2b3950;">11</div>
<div class="cell" style="left:3274.4px;top:1328.0px;background:#08de72;color:#fff;-webkit-text-stroke:0.35px currentColor;">4</div>
<div class="cell" style="left:3364.8px;top:1328.0px;background:#00a33b;color:#fff;-webkit-text-stroke:0.35px currentColor;">3</div>
<div class="cell" style="left:3455.2px;top:1328.0px;background:#08de72;color:#fff;-webkit-text-stroke:0.35px currentColor;">5</div>
<div class="cell" style="left:3545.6px;top:1328.0px;background:#00a33b;color:#fff;-webkit-text-stroke:0.35px currentColor;">3</div>
<div class="cell" style="left:3635.9px;top:1328.0px;background:#08de72;color:#fff;-webkit-text-stroke:0.35px currentColor;">6</div>
<div class="cell" style="left:3726.3px;top:1328.0px;background:#08de72;color:#fff;-webkit-text-stroke:0.35px currentColor;">8</div>
<div class="cell" style="left:3816.7px;top:1328.0px;background:#08de72;color:#fff;-webkit-text-stroke:0.35px currentColor;">6</div>
<svg class="r" style="left:3924.0px;top:1342.0px;" width="28" height="28" viewBox="0 0 28 28"><circle cx="14" cy="14" r="14" fill="#6b7280"/><rect x="12.3" y="6" width="3.4" height="10" rx="1.5" fill="#fff"/><circle cx="14" cy="20.5" r="2" fill="#fff"/></svg>
<svg class="r" style="left:3976.0px;top:1344.0px;" width="28" height="25" viewBox="0 0 28 25"><path d="M2 1.5 L2 23 L27 23" fill="none" stroke="#6b7280" stroke-width="3" stroke-linecap="round"/><path d="M7 16 L13 9 L17 13 L25 5" fill="none" stroke="#6b7280" stroke-width="3" stroke-linecap="round" stroke-linejoin="round"/></svg>
<svg class="r" style="left:4027.0px;top:1342.0px;" width="24" height="29" viewBox="0 0 24 29"><path d="M1.5 6 L22.5 6" stroke="#6b7280" stroke-width="2.6" stroke-linecap="round"/><path d="M8 6 L8 2.5 Q8 1.3 9.2 1.3 L14.8 1.3 Q16 1.3 16 2.5 L16 6" fill="none" stroke="#6b7280" stroke-width="2.4"/><path d="M3.5 6 L4.5 26 Q4.6 27.7 6.3 27.7 L17.7 27.7 Q19.4 27.7 19.5 26 L20.5 6" fill="none" stroke="#6b7280" stroke-width="2.6"/><path d="M9 11 L9 23 M12 11 L12 23 M15 11 L15 23" stroke="#6b7280" stroke-width="2"/></svg>
<div class="r" style="left:514.0px;top:1562.0px;width:3596.0px;height:2.0px;background:#e5e7eb;"></div>
<div class="r" style="left:539.0px;top:1473.5px;width:31.0px;height:31.0px;border:2px solid #d1d5db;border-radius:7px;background:#fff;"></div>
<div class="r" style="left:618.0px;top:1483.0px;width:30.0px;height:22.0px;background:linear-gradient(#000 0 7px,#dd0000 7px 14.5px,#ffce00 14.5px);box-shadow:0 2px 3px rgba(0,0,0,0.12);"></div>
<div class="t" style="left:669.5px;top:1481.3px;font-size:24.5px;color:#2b3950;">DE</div>
<div class="r" style="left:811px;top:1478.0px;width:24px;height:24px;border:2.2px solid #4b5563;border-radius:50%;"></div>
<div class="t" style="left:913.0px;top:1453.0px;font-size:26px;letter-spacing:-0.25px;color:#0b7a4b;-webkit-text-stroke:0.35px currentColor;">citronellakerze</div>
<svg class="r" style="left:1085.7px;top:1455.0px;" width="21" height="21" viewBox="0 0 21 21"><path d="M8 3 L4 3 Q2 3 2 5 L2 17 Q2 19 4 19 L16 19 Q18 19 18 17 L18 13" fill="none" stroke="#6b7280" stroke-width="2.6" stroke-linecap="round"/><path d="M9 12 L18.5 2.5 M12 2 L19 2 L19 9" fill="none" stroke="#6b7280" stroke-width="2.6" stroke-linecap="round" stroke-linejoin="round"/></svg>
<div class="r" style="left:920.5px;top:1495.0px;width:218.0px;height:40.0px;background:#dbeafe;border:2px solid #bfdbfe;border-radius:11px;"></div>
<div class="t" style="left:938.0px;top:1502.3px;font-size:24.5px;letter-spacing:0.06px;color:#1e40af;-webkit-text-stroke:0.35px currentColor;">Flammschalen</div>
<svg class="r" style="left:1112.5px;top:1509.0px;" width="13" height="13" viewBox="0 0 13 13"><path d="M1 1 L12 12 M12 1 L1 12" stroke="#1e40af" stroke-width="1.8"/></svg>
<svg class="r" style="left:1151.0px;top:1504.5px;" width="21" height="21" viewBox="0 0 21 21"><rect x="1.2" y="1.2" width="18.6" height="18.6" rx="3" fill="none" stroke="#6b7280" stroke-width="2.4"/><path d="M10.5 5.5 L10.5 15.5 M5.5 10.5 L15.5 10.5" stroke="#6b7280" stroke-width="2.4"/></svg>
<div class="t" style="left:1253.0px;top:1480.7px;font-size:25.5px;letter-spacing:-1.51px;width:120px;text-align:center;color:#2b3950;">N/A</div>
<div class="t" style="left:1392.0px;top:1480.7px;font-size:25.5px;letter-spacing:-0.19px;width:160px;text-align:center;color:#2b3950;">Watchlist</div>
<div class="r" style="left:1562.0px;top:1424.0px;width:524.0px;height:140.0px;background:#fdfdfd;"></div>
<div class="r" style="left:1578.0px;top:1447.0px;width:140.7px;height:30px;background:#c9dff1;filter:blur(11px);border-radius:8px;"></div>
<div class="r" style="left:1719.7px;top:1447.0px;width:182.6px;height:30px;background:#c9dff1;filter:blur(11px);border-radius:8px;"></div>
<div class="r" style="left:1905.7px;top:1447.0px;width:96.3px;height:30px;background:#c9dff1;filter:blur(11px);border-radius:8px;"></div>
<div class="r" style="left:1578.0px;top:1480.0px;width:207.9px;height:30px;background:#c9dff1;filter:blur(11px);border-radius:8px;"></div>
<div class="r" style="left:1789.4px;top:1480.0px;width:84.6px;height:30px;background:#c9dff1;filter:blur(11px);border-radius:8px;"></div>
<div class="r" style="left:1578px;top:1513.0px;width:148.0px;height:26px;background:#c8e0d0;filter:blur(10px);border-radius:8px;"></div>
<div class="r" style="left:1738.0px;top:1516.0px;width:28px;height:20px;background:#dcd8dc;filter:blur(9px);border-radius:8px;"></div>
<div class="t" style="left:2093.0px;top:1480.7px;font-size:25.5px;width:40px;text-align:center;color:#2b3950;">1</div>
<div class="cell" style="left:2190.0px;top:1466.0px;background:#08de72;color:#fff;-webkit-text-stroke:0.35px currentColor;">4</div>
<div class="cell" style="left:2280.4px;top:1466.0px;background:#00a33b;color:#fff;-webkit-text-stroke:0.35px currentColor;">2</div>
<div class="cell" style="left:2370.7px;top:1466.0px;background:#00a33b;color:#fff;-webkit-text-stroke:0.35px currentColor;">3</div>
<div class="cell" style="left:2461.1px;top:1466.0px;background:#00a33b;color:#fff;-webkit-text-stroke:0.35px currentColor;">3</div>
<div class="cell" style="left:2551.5px;top:1466.0px;background:#08de72;color:#fff;-webkit-text-stroke:0.35px currentColor;">4</div>
<div class="cell" style="left:2641.8px;top:1466.0px;background:#00a33b;color:#fff;-webkit-text-stroke:0.35px currentColor;">2</div>
<div class="cell" style="left:2732.2px;top:1466.0px;background:#00a33b;color:#fff;-webkit-text-stroke:0.35px currentColor;">2</div>
<div class="cell" style="left:2822.6px;top:1466.0px;background:#00a33b;color:#fff;-webkit-text-stroke:0.35px currentColor;">1</div>
<div class="cell" style="left:2913.0px;top:1466.0px;background:#00a33b;color:#fff;-webkit-text-stroke:0.35px currentColor;">3</div>
<div class="cell" style="left:3003.3px;top:1466.0px;background:#00a33b;color:#fff;-webkit-text-stroke:0.35px currentColor;">2</div>
<div class="cell" style="left:3093.7px;top:1466.0px;background:#00a33b;color:#fff;-webkit-text-stroke:0.35px currentColor;">1</div>
<div class="cell" style="left:3184.1px;top:1466.0px;background:#08de72;color:#fff;-webkit-text-stroke:0.35px currentColor;">7</div>
<div class="cell" style="left:3274.4px;top:1466.0px;background:#00a33b;color:#fff;-webkit-text-stroke:0.35px currentColor;">3</div>
<div class="cell" style="left:3364.8px;top:1466.0px;background:#fddf20;color:#2b3950;">13</div>
<div class="cell" style="left:3455.2px;top:1466.0px;background:#08de72;color:#fff;-webkit-text-stroke:0.35px currentColor;">9</div>
<div class="cell" style="left:3545.6px;top:1466.0px;background:#00a33b;color:#fff;-webkit-text-stroke:0.35px currentColor;">2</div>
<div class="cell" style="left:3635.9px;top:1466.0px;background:#fddf20;color:#2b3950;">12</div>
<div class="cell" style="left:3726.3px;top:1466.0px;background:#08de72;color:#fff;-webkit-text-stroke:0.35px currentColor;">4</div>
<div class="cell" style="left:3816.7px;top:1466.0px;background:#fddf20;color:#2b3950;">11</div>
<svg class="r" style="left:3924.0px;top:1480.0px;" width="28" height="28" viewBox="0 0 28 28"><circle cx="14" cy="14" r="14" fill="#6b7280"/><rect x="12.3" y="6" width="3.4" height="10" rx="1.5" fill="#fff"/><circle cx="14" cy="20.5" r="2" fill="#fff"/></svg>
<svg class="r" style="left:3976.0px;top:1482.0px;" width="28" height="25" viewBox="0 0 28 25"><path d="M2 1.5 L2 23 L27 23" fill="none" stroke="#6b7280" stroke-width="3" stroke-linecap="round"/><path d="M7 16 L13 9 L17 13 L25 5" fill="none" stroke="#6b7280" stroke-width="3" stroke-linecap="round" stroke-linejoin="round"/></svg>
<svg class="r" style="left:4027.0px;top:1480.0px;" width="24" height="29" viewBox="0 0 24 29"><path d="M1.5 6 L22.5 6" stroke="#6b7280" stroke-width="2.6" stroke-linecap="round"/><path d="M8 6 L8 2.5 Q8 1.3 9.2 1.3 L14.8 1.3 Q16 1.3 16 2.5 L16 6" fill="none" stroke="#6b7280" stroke-width="2.4"/><path d="M3.5 6 L4.5 26 Q4.6 27.7 6.3 27.7 L17.7 27.7 Q19.4 27.7 19.5 26 L20.5 6" fill="none" stroke="#6b7280" stroke-width="2.6"/><path d="M9 11 L9 23 M12 11 L12 23 M15 11 L15 23" stroke="#6b7280" stroke-width="2"/></svg>
<div class="r" style="left:514.0px;top:1700.0px;width:3596.0px;height:2.0px;background:#e5e7eb;"></div>
<div class="r" style="left:539.0px;top:1611.5px;width:31.0px;height:31.0px;border:2px solid #d1d5db;border-radius:7px;background:#fff;"></div>
<div class="r" style="left:618.0px;top:1621.0px;width:30.0px;height:22.0px;background:linear-gradient(#000 0 7px,#dd0000 7px 14.5px,#ffce00 14.5px);box-shadow:0 2px 3px rgba(0,0,0,0.12);"></div>
<div class="t" style="left:669.5px;top:1619.3px;font-size:24.5px;color:#2b3950;">DE</div>
<div class="r" style="left:811px;top:1616.0px;width:24px;height:24px;border:2.2px solid #4b5563;border-radius:50%;"></div>
<div class="t" style="left:913.0px;top:1591.0px;font-size:26px;letter-spacing:-0.29px;color:#0b7a4b;-webkit-text-stroke:0.35px currentColor;">drau&szlig;en kerze</div>
<svg class="r" style="left:1085.6px;top:1593.0px;" width="21" height="21" viewBox="0 0 21 21"><path d="M8 3 L4 3 Q2 3 2 5 L2 17 Q2 19 4 19 L16 19 Q18 19 18 17 L18 13" fill="none" stroke="#6b7280" stroke-width="2.6" stroke-linecap="round"/><path d="M9 12 L18.5 2.5 M12 2 L19 2 L19 9" fill="none" stroke="#6b7280" stroke-width="2.6" stroke-linecap="round" stroke-linejoin="round"/></svg>
<div class="r" style="left:920.5px;top:1633.0px;width:218.0px;height:40.0px;background:#dbeafe;border:2px solid #bfdbfe;border-radius:11px;"></div>
<div class="t" style="left:938.0px;top:1640.3px;font-size:24.5px;letter-spacing:0.06px;color:#1e40af;-webkit-text-stroke:0.35px currentColor;">Flammschalen</div>
<svg class="r" style="left:1112.5px;top:1647.0px;" width="13" height="13" viewBox="0 0 13 13"><path d="M1 1 L12 12 M12 1 L1 12" stroke="#1e40af" stroke-width="1.8"/></svg>
<svg class="r" style="left:1151.0px;top:1642.5px;" width="21" height="21" viewBox="0 0 21 21"><rect x="1.2" y="1.2" width="18.6" height="18.6" rx="3" fill="none" stroke="#6b7280" stroke-width="2.4"/><path d="M10.5 5.5 L10.5 15.5 M5.5 10.5 L15.5 10.5" stroke="#6b7280" stroke-width="2.4"/></svg>
<div class="t" style="left:1253.0px;top:1618.7px;font-size:25.5px;letter-spacing:-1.51px;width:120px;text-align:center;color:#2b3950;">N/A</div>
<div class="t" style="left:1392.0px;top:1618.7px;font-size:25.5px;letter-spacing:-0.19px;width:160px;text-align:center;color:#2b3950;">Watchlist</div>
<div class="r" style="left:1562.0px;top:1562.0px;width:524.0px;height:140.0px;background:#fdfdfd;"></div>
<div class="r" style="left:1578.0px;top:1585.0px;width:164.5px;height:30px;background:#c9dff1;filter:blur(11px);border-radius:8px;"></div>
<div class="r" style="left:1744.2px;top:1585.0px;width:177.4px;height:30px;background:#c9dff1;filter:blur(11px);border-radius:8px;"></div>
<div class="r" style="left:1925.1px;top:1585.0px;width:97.9px;height:30px;background:#c9dff1;filter:blur(11px);border-radius:8px;"></div>
<div class="r" style="left:1578.0px;top:1618.0px;width:148.2px;height:30px;background:#c9dff1;filter:blur(11px);border-radius:8px;"></div>
<div class="r" style="left:1727.1px;top:1618.0px;width:139.9px;height:30px;background:#c9dff1;filter:blur(11px);border-radius:8px;"></div>
<div class="r" style="left:1578px;top:1651.0px;width:138.0px;height:26px;background:#c8e0d0;filter:blur(10px);border-radius:8px;"></div>
<div class="r" style="left:1728.0px;top:1654.0px;width:28px;height:20px;background:#dcd8dc;filter:blur(9px);border-radius:8px;"></div>
<div class="t" style="left:2093.0px;top:1618.7px;font-size:25.5px;width:40px;text-align:center;color:#2b3950;">1</div>
<div class="cell" style="left:2190.0px;top:1604.0px;background:#e5e7eb;color:#2b3950;">0</div>
<div class="cell" style="left:2280.4px;top:1604.0px;background:#e5e7eb;color:#2b3950;">0</div>
<div class="cell" style="left:2370.7px;top:1604.0px;background:#e5e7eb;color:#2b3950;">0</div>
<div class="cell" style="left:2461.1px;top:1604.0px;background:#e5e7eb;color:#2b3950;">0</div>
<div class="cell" style="left:2551.5px;top:1604.0px;background:#e5e7eb;color:#2b3950;">0</div>
<div class="cell" style="left:2641.8px;top:1604.0px;background:#e5e7eb;color:#2b3950;">0</div>
<div class="cell" style="left:2732.2px;top:1604.0px;background:#fe6666;color:#fff;-webkit-text-stroke:0.35px currentColor;">71</div>
<div class="cell" style="left:2822.6px;top:1604.0px;background:#fdb76a;color:#2b3950;">23</div>
<div class="cell" style="left:2913.0px;top:1604.0px;background:#fdb76a;color:#2b3950;">40</div>
<div class="cell" style="left:3003.3px;top:1604.0px;background:#fdb76a;color:#2b3950;">26</div>
<div class="cell" style="left:3093.7px;top:1604.0px;background:#fdb76a;color:#2b3950;">42</div>
<div class="cell" style="left:3184.1px;top:1604.0px;background:#fddf20;color:#2b3950;">16</div>
<div class="cell" style="left:3274.4px;top:1604.0px;background:#fddf20;color:#2b3950;">14</div>
<div class="cell" style="left:3364.8px;top:1604.0px;background:#fdb76a;color:#2b3950;">32</div>
<div class="cell" style="left:3455.2px;top:1604.0px;background:#08de72;color:#fff;-webkit-text-stroke:0.35px currentColor;">6</div>
<div class="cell" style="left:3545.6px;top:1604.0px;background:#08de72;color:#fff;-webkit-text-stroke:0.35px currentColor;">7</div>
<div class="cell" style="left:3635.9px;top:1604.0px;background:#08de72;color:#fff;-webkit-text-stroke:0.35px currentColor;">4</div>
<div class="cell" style="left:3726.3px;top:1604.0px;background:#fddf20;color:#2b3950;">11</div>
<div class="cell" style="left:3816.7px;top:1604.0px;background:#08de72;color:#fff;-webkit-text-stroke:0.35px currentColor;">10</div>
<svg class="r" style="left:3924.0px;top:1618.0px;" width="28" height="28" viewBox="0 0 28 28"><circle cx="14" cy="14" r="14" fill="#6b7280"/><rect x="12.3" y="6" width="3.4" height="10" rx="1.5" fill="#fff"/><circle cx="14" cy="20.5" r="2" fill="#fff"/></svg>
<svg class="r" style="left:3976.0px;top:1620.0px;" width="28" height="25" viewBox="0 0 28 25"><path d="M2 1.5 L2 23 L27 23" fill="none" stroke="#6b7280" stroke-width="3" stroke-linecap="round"/><path d="M7 16 L13 9 L17 13 L25 5" fill="none" stroke="#6b7280" stroke-width="3" stroke-linecap="round" stroke-linejoin="round"/></svg>
<svg class="r" style="left:4027.0px;top:1618.0px;" width="24" height="29" viewBox="0 0 24 29"><path d="M1.5 6 L22.5 6" stroke="#6b7280" stroke-width="2.6" stroke-linecap="round"/><path d="M8 6 L8 2.5 Q8 1.3 9.2 1.3 L14.8 1.3 Q16 1.3 16 2.5 L16 6" fill="none" stroke="#6b7280" stroke-width="2.4"/><path d="M3.5 6 L4.5 26 Q4.6 27.7 6.3 27.7 L17.7 27.7 Q19.4 27.7 19.5 26 L20.5 6" fill="none" stroke="#6b7280" stroke-width="2.6"/><path d="M9 11 L9 23 M12 11 L12 23 M15 11 L15 23" stroke="#6b7280" stroke-width="2"/></svg>
<div class="r" style="left:514.0px;top:1838.0px;width:3596.0px;height:2.0px;background:#e5e7eb;"></div>
<div class="r" style="left:539.0px;top:1749.5px;width:31.0px;height:31.0px;border:2px solid #d1d5db;border-radius:7px;background:#fff;"></div>
<div class="r" style="left:618.0px;top:1759.0px;width:30.0px;height:22.0px;background:linear-gradient(#000 0 7px,#dd0000 7px 14.5px,#ffce00 14.5px);box-shadow:0 2px 3px rgba(0,0,0,0.12);"></div>
<div class="t" style="left:669.5px;top:1757.3px;font-size:24.5px;color:#2b3950;">DE</div>
<div class="r" style="left:811px;top:1754.0px;width:24px;height:24px;border:2.2px solid #4b5563;border-radius:50%;"></div>
<div class="t" style="left:913.0px;top:1729.0px;font-size:26px;letter-spacing:-0.26px;color:#0b7a4b;-webkit-text-stroke:0.35px currentColor;">flammschale 2er set</div>
<svg class="r" style="left:1149.3px;top:1731.0px;" width="21" height="21" viewBox="0 0 21 21"><path d="M8 3 L4 3 Q2 3 2 5 L2 17 Q2 19 4 19 L16 19 Q18 19 18 17 L18 13" fill="none" stroke="#6b7280" stroke-width="2.6" stroke-linecap="round"/><path d="M9 12 L18.5 2.5 M12 2 L19 2 L19 9" fill="none" stroke="#6b7280" stroke-width="2.6" stroke-linecap="round" stroke-linejoin="round"/></svg>
<div class="r" style="left:920.5px;top:1771.0px;width:218.0px;height:40.0px;background:#dbeafe;border:2px solid #bfdbfe;border-radius:11px;"></div>
<div class="t" style="left:938.0px;top:1778.3px;font-size:24.5px;letter-spacing:0.06px;color:#1e40af;-webkit-text-stroke:0.35px currentColor;">Flammschalen</div>
<svg class="r" style="left:1112.5px;top:1785.0px;" width="13" height="13" viewBox="0 0 13 13"><path d="M1 1 L12 12 M12 1 L1 12" stroke="#1e40af" stroke-width="1.8"/></svg>
<svg class="r" style="left:1151.0px;top:1780.5px;" width="21" height="21" viewBox="0 0 21 21"><rect x="1.2" y="1.2" width="18.6" height="18.6" rx="3" fill="none" stroke="#6b7280" stroke-width="2.4"/><path d="M10.5 5.5 L10.5 15.5 M5.5 10.5 L15.5 10.5" stroke="#6b7280" stroke-width="2.4"/></svg>
<div class="t" style="left:1253.0px;top:1756.7px;font-size:25.5px;letter-spacing:-1.51px;width:120px;text-align:center;color:#2b3950;">N/A</div>
<div class="t" style="left:1392.0px;top:1756.7px;font-size:25.5px;width:160px;text-align:center;color:#2b3950;">Seller</div>
<div class="r" style="left:1562.0px;top:1700.0px;width:524.0px;height:140.0px;background:#fdfdfd;"></div>
<div class="r" style="left:1578.0px;top:1723.0px;width:214.3px;height:30px;background:#c9dff1;filter:blur(11px);border-radius:8px;"></div>
<div class="r" style="left:1793.3px;top:1723.0px;width:120.7px;height:30px;background:#c9dff1;filter:blur(11px);border-radius:8px;"></div>
<div class="r" style="left:1915.6px;top:1723.0px;width:72.4px;height:30px;background:#c9dff1;filter:blur(11px);border-radius:8px;"></div>
<div class="r" style="left:1578.0px;top:1756.0px;width:272.5px;height:30px;background:#c9dff1;filter:blur(11px);border-radius:8px;"></div>
<div class="r" style="left:1853.3px;top:1756.0px;width:154.7px;height:30px;background:#c9dff1;filter:blur(11px);border-radius:8px;"></div>
<div class="r" style="left:1578px;top:1789.0px;width:144.0px;height:26px;background:#c8e0d0;filter:blur(10px);border-radius:8px;"></div>
<div class="r" style="left:1734.0px;top:1792.0px;width:28px;height:20px;background:#dcd8dc;filter:blur(9px);border-radius:8px;"></div>
<div class="t" style="left:2093.0px;top:1756.7px;font-size:25.5px;width:40px;text-align:center;color:#2b3950;">1</div>
<div class="cell" style="left:2190.0px;top:1742.0px;background:#00a33b;color:#fff;-webkit-text-stroke:0.35px currentColor;">3</div>
<div class="cell" style="left:2280.4px;top:1742.0px;background:#00a33b;color:#fff;-webkit-text-stroke:0.35px currentColor;">2</div>
<div class="cell" style="left:2370.7px;top:1742.0px;background:#00a33b;color:#fff;-webkit-text-stroke:0.35px currentColor;">2</div>
<div class="cell" style="left:2461.1px;top:1742.0px;background:#00a33b;color:#fff;-webkit-text-stroke:0.35px currentColor;">2</div>
<div class="cell" style="left:2551.5px;top:1742.0px;background:#00a33b;color:#fff;-webkit-text-stroke:0.35px currentColor;">2</div>
<div class="cell" style="left:2641.8px;top:1742.0px;background:#00a33b;color:#fff;-webkit-text-stroke:0.35px currentColor;">1</div>
<div class="cell" style="left:2732.2px;top:1742.0px;background:#00a33b;color:#fff;-webkit-text-stroke:0.35px currentColor;">1</div>
<div class="cell" style="left:2822.6px;top:1742.0px;background:#00a33b;color:#fff;-webkit-text-stroke:0.35px currentColor;">1</div>
<div class="cell" style="left:2913.0px;top:1742.0px;background:#00a33b;color:#fff;-webkit-text-stroke:0.35px currentColor;">1</div>
<div class="cell" style="left:3003.3px;top:1742.0px;background:#00a33b;color:#fff;-webkit-text-stroke:0.35px currentColor;">1</div>
<div class="cell" style="left:3093.7px;top:1742.0px;background:#00a33b;color:#fff;-webkit-text-stroke:0.35px currentColor;">1</div>
<div class="cell" style="left:3184.1px;top:1742.0px;background:#00a33b;color:#fff;-webkit-text-stroke:0.35px currentColor;">1</div>
<div class="cell" style="left:3274.4px;top:1742.0px;background:#00a33b;color:#fff;-webkit-text-stroke:0.35px currentColor;">1</div>
<div class="cell" style="left:3364.8px;top:1742.0px;background:#00a33b;color:#fff;-webkit-text-stroke:0.35px currentColor;">1</div>
<div class="cell" style="left:3455.2px;top:1742.0px;background:#00a33b;color:#fff;-webkit-text-stroke:0.35px currentColor;">1</div>
<div class="cell" style="left:3545.6px;top:1742.0px;background:#00a33b;color:#fff;-webkit-text-stroke:0.35px currentColor;">1</div>
<div class="cell" style="left:3635.9px;top:1742.0px;background:#00a33b;color:#fff;-webkit-text-stroke:0.35px currentColor;">1</div>
<div class="cell" style="left:3726.3px;top:1742.0px;background:#00a33b;color:#fff;-webkit-text-stroke:0.35px currentColor;">1</div>
<div class="cell" style="left:3816.7px;top:1742.0px;background:#00a33b;color:#fff;-webkit-text-stroke:0.35px currentColor;">1</div>
<svg class="r" style="left:3924.0px;top:1756.0px;" width="28" height="28" viewBox="0 0 28 28"><circle cx="14" cy="14" r="14" fill="#6b7280"/><rect x="12.3" y="6" width="3.4" height="10" rx="1.5" fill="#fff"/><circle cx="14" cy="20.5" r="2" fill="#fff"/></svg>
<svg class="r" style="left:3976.0px;top:1758.0px;" width="28" height="25" viewBox="0 0 28 25"><path d="M2 1.5 L2 23 L27 23" fill="none" stroke="#6b7280" stroke-width="3" stroke-linecap="round"/><path d="M7 16 L13 9 L17 13 L25 5" fill="none" stroke="#6b7280" stroke-width="3" stroke-linecap="round" stroke-linejoin="round"/></svg>
<svg class="r" style="left:4027.0px;top:1756.0px;" width="24" height="29" viewBox="0 0 24 29"><path d="M1.5 6 L22.5 6" stroke="#6b7280" stroke-width="2.6" stroke-linecap="round"/><path d="M8 6 L8 2.5 Q8 1.3 9.2 1.3 L14.8 1.3 Q16 1.3 16 2.5 L16 6" fill="none" stroke="#6b7280" stroke-width="2.4"/><path d="M3.5 6 L4.5 26 Q4.6 27.7 6.3 27.7 L17.7 27.7 Q19.4 27.7 19.5 26 L20.5 6" fill="none" stroke="#6b7280" stroke-width="2.6"/><path d="M9 11 L9 23 M12 11 L12 23 M15 11 L15 23" stroke="#6b7280" stroke-width="2"/></svg>
<div class="r" style="left:514.0px;top:1976.0px;width:3596.0px;height:2.0px;background:#e5e7eb;"></div>
<div class="r" style="left:539.0px;top:1887.5px;width:31.0px;height:31.0px;border:2px solid #d1d5db;border-radius:7px;background:#fff;"></div>
<div class="r" style="left:618.0px;top:1897.0px;width:30.0px;height:22.0px;background:linear-gradient(#000 0 7px,#dd0000 7px 14.5px,#ffce00 14.5px);box-shadow:0 2px 3px rgba(0,0,0,0.12);"></div>
<div class="t" style="left:669.5px;top:1895.3px;font-size:24.5px;color:#2b3950;">DE</div>
<div class="r" style="left:811px;top:1892.0px;width:24px;height:24px;border:2.2px solid #4b5563;border-radius:50%;"></div>
<div class="t" style="left:913.0px;top:1867.0px;font-size:26px;letter-spacing:-0.26px;color:#0b7a4b;-webkit-text-stroke:0.35px currentColor;">flammschale 2er set</div>
<svg class="r" style="left:1149.3px;top:1869.0px;" width="21" height="21" viewBox="0 0 21 21"><path d="M8 3 L4 3 Q2 3 2 5 L2 17 Q2 19 4 19 L16 19 Q18 19 18 17 L18 13" fill="none" stroke="#6b7280" stroke-width="2.6" stroke-linecap="round"/><path d="M9 12 L18.5 2.5 M12 2 L19 2 L19 9" fill="none" stroke="#6b7280" stroke-width="2.6" stroke-linecap="round" stroke-linejoin="round"/></svg>
<div class="r" style="left:920.5px;top:1909.0px;width:218.0px;height:40.0px;background:#dbeafe;border:2px solid #bfdbfe;border-radius:11px;"></div>
<div class="t" style="left:938.0px;top:1916.3px;font-size:24.5px;letter-spacing:0.06px;color:#1e40af;-webkit-text-stroke:0.35px currentColor;">Flammschalen</div>
<svg class="r" style="left:1112.5px;top:1923.0px;" width="13" height="13" viewBox="0 0 13 13"><path d="M1 1 L12 12 M12 1 L1 12" stroke="#1e40af" stroke-width="1.8"/></svg>
<svg class="r" style="left:1151.0px;top:1918.5px;" width="21" height="21" viewBox="0 0 21 21"><rect x="1.2" y="1.2" width="18.6" height="18.6" rx="3" fill="none" stroke="#6b7280" stroke-width="2.4"/><path d="M10.5 5.5 L10.5 15.5 M5.5 10.5 L15.5 10.5" stroke="#6b7280" stroke-width="2.4"/></svg>
<div class="t" style="left:1253.0px;top:1894.7px;font-size:25.5px;letter-spacing:-1.51px;width:120px;text-align:center;color:#2b3950;">N/A</div>
<div class="t" style="left:1392.0px;top:1894.7px;font-size:25.5px;letter-spacing:-0.19px;width:160px;text-align:center;color:#2b3950;">Watchlist</div>
<div class="r" style="left:1562.0px;top:1838.0px;width:524.0px;height:140.0px;background:#fdfdfd;"></div>
<div class="r" style="left:1578.0px;top:1861.0px;width:228.2px;height:30px;background:#c9dff1;filter:blur(11px);border-radius:8px;"></div>
<div class="r" style="left:1806.4px;top:1861.0px;width:181.6px;height:30px;background:#c9dff1;filter:blur(11px);border-radius:8px;"></div>
<div class="r" style="left:1578.0px;top:1894.0px;width:259.9px;height:30px;background:#c9dff1;filter:blur(11px);border-radius:8px;"></div>
<div class="r" style="left:1841.1px;top:1894.0px;width:166.9px;height:30px;background:#c9dff1;filter:blur(11px);border-radius:8px;"></div>
<div class="r" style="left:1578px;top:1927.0px;width:144.0px;height:26px;background:#c8e0d0;filter:blur(10px);border-radius:8px;"></div>
<div class="r" style="left:1734.0px;top:1930.0px;width:28px;height:20px;background:#dcd8dc;filter:blur(9px);border-radius:8px;"></div>
<div class="t" style="left:2093.0px;top:1894.7px;font-size:25.5px;width:40px;text-align:center;color:#2b3950;">1</div>
<div class="cell" style="left:2190.0px;top:1880.0px;background:#00a33b;color:#fff;-webkit-text-stroke:0.35px currentColor;">3</div>
<div class="cell" style="left:2280.4px;top:1880.0px;background:#00a33b;color:#fff;-webkit-text-stroke:0.35px currentColor;">2</div>
<div class="cell" style="left:2370.7px;top:1880.0px;background:#00a33b;color:#fff;-webkit-text-stroke:0.35px currentColor;">2</div>
<div class="cell" style="left:2461.1px;top:1880.0px;background:#00a33b;color:#fff;-webkit-text-stroke:0.35px currentColor;">2</div>
<div class="cell" style="left:2551.5px;top:1880.0px;background:#00a33b;color:#fff;-webkit-text-stroke:0.35px currentColor;">2</div>
<div class="cell" style="left:2641.8px;top:1880.0px;background:#00a33b;color:#fff;-webkit-text-stroke:0.35px currentColor;">1</div>
<div class="cell" style="left:2732.2px;top:1880.0px;background:#00a33b;color:#fff;-webkit-text-stroke:0.35px currentColor;">1</div>
<div class="cell" style="left:2822.6px;top:1880.0px;background:#00a33b;color:#fff;-webkit-text-stroke:0.35px currentColor;">1</div>
<div class="cell" style="left:2913.0px;top:1880.0px;background:#00a33b;color:#fff;-webkit-text-stroke:0.35px currentColor;">1</div>
<div class="cell" style="left:3003.3px;top:1880.0px;background:#00a33b;color:#fff;-webkit-text-stroke:0.35px currentColor;">1</div>
<div class="cell" style="left:3093.7px;top:1880.0px;background:#00a33b;color:#fff;-webkit-text-stroke:0.35px currentColor;">1</div>
<div class="cell" style="left:3184.1px;top:1880.0px;background:#00a33b;color:#fff;-webkit-text-stroke:0.35px currentColor;">1</div>
<div class="cell" style="left:3274.4px;top:1880.0px;background:#00a33b;color:#fff;-webkit-text-stroke:0.35px currentColor;">1</div>
<div class="cell" style="left:3364.8px;top:1880.0px;background:#00a33b;color:#fff;-webkit-text-stroke:0.35px currentColor;">1</div>
<div class="cell" style="left:3455.2px;top:1880.0px;background:#00a33b;color:#fff;-webkit-text-stroke:0.35px currentColor;">1</div>
<div class="cell" style="left:3545.6px;top:1880.0px;background:#00a33b;color:#fff;-webkit-text-stroke:0.35px currentColor;">1</div>
<div class="cell" style="left:3635.9px;top:1880.0px;background:#00a33b;color:#fff;-webkit-text-stroke:0.35px currentColor;">1</div>
<div class="cell" style="left:3726.3px;top:1880.0px;background:#00a33b;color:#fff;-webkit-text-stroke:0.35px currentColor;">1</div>
<div class="cell" style="left:3816.7px;top:1880.0px;background:#00a33b;color:#fff;-webkit-text-stroke:0.35px currentColor;">1</div>
<svg class="r" style="left:3924.0px;top:1894.0px;" width="28" height="28" viewBox="0 0 28 28"><circle cx="14" cy="14" r="14" fill="#6b7280"/><rect x="12.3" y="6" width="3.4" height="10" rx="1.5" fill="#fff"/><circle cx="14" cy="20.5" r="2" fill="#fff"/></svg>
<svg class="r" style="left:3976.0px;top:1896.0px;" width="28" height="25" viewBox="0 0 28 25"><path d="M2 1.5 L2 23 L27 23" fill="none" stroke="#6b7280" stroke-width="3" stroke-linecap="round"/><path d="M7 16 L13 9 L17 13 L25 5" fill="none" stroke="#6b7280" stroke-width="3" stroke-linecap="round" stroke-linejoin="round"/></svg>
<svg class="r" style="left:4027.0px;top:1894.0px;" width="24" height="29" viewBox="0 0 24 29"><path d="M1.5 6 L22.5 6" stroke="#6b7280" stroke-width="2.6" stroke-linecap="round"/><path d="M8 6 L8 2.5 Q8 1.3 9.2 1.3 L14.8 1.3 Q16 1.3 16 2.5 L16 6" fill="none" stroke="#6b7280" stroke-width="2.4"/><path d="M3.5 6 L4.5 26 Q4.6 27.7 6.3 27.7 L17.7 27.7 Q19.4 27.7 19.5 26 L20.5 6" fill="none" stroke="#6b7280" stroke-width="2.6"/><path d="M9 11 L9 23 M12 11 L12 23 M15 11 L15 23" stroke="#6b7280" stroke-width="2"/></svg>
<div class="r" style="left:514.0px;top:2114.0px;width:3596.0px;height:2.0px;background:#e5e7eb;"></div>
<div class="r" style="left:539.0px;top:2025.5px;width:31.0px;height:31.0px;border:2px solid #d1d5db;border-radius:7px;background:#fff;"></div>
<div class="r" style="left:618.0px;top:2035.0px;width:30.0px;height:22.0px;background:linear-gradient(#000 0 7px,#dd0000 7px 14.5px,#ffce00 14.5px);box-shadow:0 2px 3px rgba(0,0,0,0.12);"></div>
<div class="t" style="left:669.5px;top:2033.3px;font-size:24.5px;color:#2b3950;">DE</div>
<div class="r" style="left:811px;top:2030.0px;width:24px;height:24px;border:2.2px solid #4b5563;border-radius:50%;"></div>
<div class="t" style="left:913.0px;top:2005.0px;font-size:26px;letter-spacing:-0.28px;color:#0b7a4b;-webkit-text-stroke:0.35px currentColor;">flammschale aluminium</div>
<svg class="r" style="left:1187.5px;top:2007.0px;" width="21" height="21" viewBox="0 0 21 21"><path d="M8 3 L4 3 Q2 3 2 5 L2 17 Q2 19 4 19 L16 19 Q18 19 18 17 L18 13" fill="none" stroke="#6b7280" stroke-width="2.6" stroke-linecap="round"/><path d="M9 12 L18.5 2.5 M12 2 L19 2 L19 9" fill="none" stroke="#6b7280" stroke-width="2.6" stroke-linecap="round" stroke-linejoin="round"/></svg>
<div class="r" style="left:920.5px;top:2047.0px;width:218.0px;height:40.0px;background:#dbeafe;border:2px solid #bfdbfe;border-radius:11px;"></div>
<div class="t" style="left:938.0px;top:2054.3px;font-size:24.5px;letter-spacing:0.06px;color:#1e40af;-webkit-text-stroke:0.35px currentColor;">Flammschalen</div>
<svg class="r" style="left:1112.5px;top:2061.0px;" width="13" height="13" viewBox="0 0 13 13"><path d="M1 1 L12 12 M12 1 L1 12" stroke="#1e40af" stroke-width="1.8"/></svg>
<svg class="r" style="left:1151.0px;top:2056.5px;" width="21" height="21" viewBox="0 0 21 21"><rect x="1.2" y="1.2" width="18.6" height="18.6" rx="3" fill="none" stroke="#6b7280" stroke-width="2.4"/><path d="M10.5 5.5 L10.5 15.5 M5.5 10.5 L15.5 10.5" stroke="#6b7280" stroke-width="2.4"/></svg>
<div class="t" style="left:1253.0px;top:2032.7px;font-size:25.5px;letter-spacing:-1.51px;width:120px;text-align:center;color:#2b3950;">N/A</div>
<div class="t" style="left:1392.0px;top:2032.7px;font-size:25.5px;width:160px;text-align:center;color:#2b3950;">Seller</div>
<div class="r" style="left:1562.0px;top:1976.0px;width:524.0px;height:140.0px;background:#fdfdfd;"></div>
<div class="r" style="left:1578.0px;top:1999.0px;width:136.6px;height:30px;background:#c9dff1;filter:blur(11px);border-radius:8px;"></div>
<div class="r" style="left:1717.1px;top:1999.0px;width:130.0px;height:30px;background:#c9dff1;filter:blur(11px);border-radius:8px;"></div>
<div class="r" style="left:1847.3px;top:1999.0px;width:140.7px;height:30px;background:#c9dff1;filter:blur(11px);border-radius:8px;"></div>
<div class="r" style="left:1578.0px;top:2032.0px;width:174.4px;height:30px;background:#c9dff1;filter:blur(11px);border-radius:8px;"></div>
<div class="r" style="left:1752.6px;top:2032.0px;width:120.0px;height:30px;background:#c9dff1;filter:blur(11px);border-radius:8px;"></div>
<div class="r" style="left:1873.3px;top:2032.0px;width:134.7px;height:30px;background:#c9dff1;filter:blur(11px);border-radius:8px;"></div>
<div class="r" style="left:1578px;top:2065.0px;width:144.0px;height:26px;background:#c8e0d0;filter:blur(10px);border-radius:8px;"></div>
<div class="r" style="left:1734.0px;top:2068.0px;width:28px;height:20px;background:#dcd8dc;filter:blur(9px);border-radius:8px;"></div>
<div class="t" style="left:2093.0px;top:2032.7px;font-size:25.5px;width:40px;text-align:center;color:#2b3950;">1</div>
<div class="cell" style="left:2190.0px;top:2018.0px;background:#00a33b;color:#fff;-webkit-text-stroke:0.35px currentColor;">1</div>
<div class="cell" style="left:2280.4px;top:2018.0px;background:#00a33b;color:#fff;-webkit-text-stroke:0.35px currentColor;">1</div>
<div class="cell" style="left:2370.7px;top:2018.0px;background:#00a33b;color:#fff;-webkit-text-stroke:0.35px currentColor;">2</div>
<div class="cell" style="left:2461.1px;top:2018.0px;background:#00a33b;color:#fff;-webkit-text-stroke:0.35px currentColor;">2</div>
<div class="cell" style="left:2551.5px;top:2018.0px;background:#00a33b;color:#fff;-webkit-text-stroke:0.35px currentColor;">2</div>
<div class="cell" style="left:2641.8px;top:2018.0px;background:#00a33b;color:#fff;-webkit-text-stroke:0.35px currentColor;">1</div>
<div class="cell" style="left:2732.2px;top:2018.0px;background:#00a33b;color:#fff;-webkit-text-stroke:0.35px currentColor;">1</div>
<div class="cell" style="left:2822.6px;top:2018.0px;background:#00a33b;color:#fff;-webkit-text-stroke:0.35px currentColor;">1</div>
<div class="cell" style="left:2913.0px;top:2018.0px;background:#00a33b;color:#fff;-webkit-text-stroke:0.35px currentColor;">1</div>
<div class="cell" style="left:3003.3px;top:2018.0px;background:#00a33b;color:#fff;-webkit-text-stroke:0.35px currentColor;">1</div>
<div class="cell" style="left:3093.7px;top:2018.0px;background:#00a33b;color:#fff;-webkit-text-stroke:0.35px currentColor;">1</div>
<div class="cell" style="left:3184.1px;top:2018.0px;background:#00a33b;color:#fff;-webkit-text-stroke:0.35px currentColor;">1</div>
<div class="cell" style="left:3274.4px;top:2018.0px;background:#00a33b;color:#fff;-webkit-text-stroke:0.35px currentColor;">1</div>
<div class="cell" style="left:3364.8px;top:2018.0px;background:#00a33b;color:#fff;-webkit-text-stroke:0.35px currentColor;">1</div>
<div class="cell" style="left:3455.2px;top:2018.0px;background:#00a33b;color:#fff;-webkit-text-stroke:0.35px currentColor;">2</div>
<div class="cell" style="left:3545.6px;top:2018.0px;background:#00a33b;color:#fff;-webkit-text-stroke:0.35px currentColor;">1</div>
<div class="cell" style="left:3635.9px;top:2018.0px;background:#00a33b;color:#fff;-webkit-text-stroke:0.35px currentColor;">1</div>
<div class="cell" style="left:3726.3px;top:2018.0px;background:#00a33b;color:#fff;-webkit-text-stroke:0.35px currentColor;">2</div>
<div class="cell" style="left:3816.7px;top:2018.0px;background:#00a33b;color:#fff;-webkit-text-stroke:0.35px currentColor;">1</div>
<svg class="r" style="left:3924.0px;top:2032.0px;" width="28" height="28" viewBox="0 0 28 28"><circle cx="14" cy="14" r="14" fill="#6b7280"/><rect x="12.3" y="6" width="3.4" height="10" rx="1.5" fill="#fff"/><circle cx="14" cy="20.5" r="2" fill="#fff"/></svg>
<svg class="r" style="left:3976.0px;top:2034.0px;" width="28" height="25" viewBox="0 0 28 25"><path d="M2 1.5 L2 23 L27 23" fill="none" stroke="#6b7280" stroke-width="3" stroke-linecap="round"/><path d="M7 16 L13 9 L17 13 L25 5" fill="none" stroke="#6b7280" stroke-width="3" stroke-linecap="round" stroke-linejoin="round"/></svg>
<svg class="r" style="left:4027.0px;top:2032.0px;" width="24" height="29" viewBox="0 0 24 29"><path d="M1.5 6 L22.5 6" stroke="#6b7280" stroke-width="2.6" stroke-linecap="round"/><path d="M8 6 L8 2.5 Q8 1.3 9.2 1.3 L14.8 1.3 Q16 1.3 16 2.5 L16 6" fill="none" stroke="#6b7280" stroke-width="2.4"/><path d="M3.5 6 L4.5 26 Q4.6 27.7 6.3 27.7 L17.7 27.7 Q19.4 27.7 19.5 26 L20.5 6" fill="none" stroke="#6b7280" stroke-width="2.6"/><path d="M9 11 L9 23 M12 11 L12 23 M15 11 L15 23" stroke="#6b7280" stroke-width="2"/></svg>
<div class="r" style="left:514.0px;top:2252.0px;width:3596.0px;height:2.0px;background:#e5e7eb;"></div>
<div class="r" style="left:539.0px;top:2163.5px;width:31.0px;height:31.0px;border:2px solid #d1d5db;border-radius:7px;background:#fff;"></div>
<div class="r" style="left:618.0px;top:2173.0px;width:30.0px;height:22.0px;background:linear-gradient(#000 0 7px,#dd0000 7px 14.5px,#ffce00 14.5px);box-shadow:0 2px 3px rgba(0,0,0,0.12);"></div>
<div class="t" style="left:669.5px;top:2171.3px;font-size:24.5px;color:#2b3950;">DE</div>
<div class="r" style="left:811px;top:2168.0px;width:24px;height:24px;border:2.2px solid #4b5563;border-radius:50%;"></div>
<div class="t" style="left:913.0px;top:2143.0px;font-size:26px;letter-spacing:-0.28px;color:#0b7a4b;-webkit-text-stroke:0.35px currentColor;">flammschale aluminium</div>
<svg class="r" style="left:1187.5px;top:2145.0px;" width="21" height="21" viewBox="0 0 21 21"><path d="M8 3 L4 3 Q2 3 2 5 L2 17 Q2 19 4 19 L16 19 Q18 19 18 17 L18 13" fill="none" stroke="#6b7280" stroke-width="2.6" stroke-linecap="round"/><path d="M9 12 L18.5 2.5 M12 2 L19 2 L19 9" fill="none" stroke="#6b7280" stroke-width="2.6" stroke-linecap="round" stroke-linejoin="round"/></svg>
<div class="r" style="left:920.5px;top:2185.0px;width:218.0px;height:40.0px;background:#dbeafe;border:2px solid #bfdbfe;border-radius:11px;"></div>
<div class="t" style="left:938.0px;top:2192.3px;font-size:24.5px;letter-spacing:0.06px;color:#1e40af;-webkit-text-stroke:0.35px currentColor;">Flammschalen</div>
<svg class="r" style="left:1112.5px;top:2199.0px;" width="13" height="13" viewBox="0 0 13 13"><path d="M1 1 L12 12 M12 1 L1 12" stroke="#1e40af" stroke-width="1.8"/></svg>
<svg class="r" style="left:1151.0px;top:2194.5px;" width="21" height="21" viewBox="0 0 21 21"><rect x="1.2" y="1.2" width="18.6" height="18.6" rx="3" fill="none" stroke="#6b7280" stroke-width="2.4"/><path d="M10.5 5.5 L10.5 15.5 M5.5 10.5 L15.5 10.5" stroke="#6b7280" stroke-width="2.4"/></svg>
<div class="t" style="left:1253.0px;top:2170.7px;font-size:25.5px;letter-spacing:-1.51px;width:120px;text-align:center;color:#2b3950;">N/A</div>
<div class="t" style="left:1392.0px;top:2170.7px;font-size:25.5px;letter-spacing:-0.19px;width:160px;text-align:center;color:#2b3950;">Watchlist</div>
<div class="r" style="left:1562.0px;top:2114.0px;width:524.0px;height:116.0px;background:#fdfdfd;"></div>
<div class="r" style="left:1578.0px;top:2137.0px;width:124.1px;height:30px;background:#c9dff1;filter:blur(11px);border-radius:8px;"></div>
<div class="r" style="left:1705.6px;top:2137.0px;width:218.3px;height:30px;background:#c9dff1;filter:blur(11px);border-radius:8px;"></div>
<div class="r" style="left:1924.4px;top:2137.0px;width:63.6px;height:30px;background:#c9dff1;filter:blur(11px);border-radius:8px;"></div>
<div class="r" style="left:1578.0px;top:2170.0px;width:178.3px;height:30px;background:#c9dff1;filter:blur(11px);border-radius:8px;"></div>
<div class="r" style="left:1756.8px;top:2170.0px;width:251.2px;height:30px;background:#c9dff1;filter:blur(11px);border-radius:8px;"></div>
<div class="r" style="left:1578px;top:2203.0px;width:144.0px;height:26px;background:#c8e0d0;filter:blur(10px);border-radius:8px;"></div>
<div class="r" style="left:1734.0px;top:2206.0px;width:28px;height:20px;background:#dcd8dc;filter:blur(9px);border-radius:8px;"></div>
<div class="t" style="left:2093.0px;top:2170.7px;font-size:25.5px;width:40px;text-align:center;color:#2b3950;">1</div>
<div class="cell" style="left:2190.0px;top:2156.0px;background:#00a33b;color:#fff;-webkit-text-stroke:0.35px currentColor;">1</div>
<div class="cell" style="left:2280.4px;top:2156.0px;background:#00a33b;color:#fff;-webkit-text-stroke:0.35px currentColor;">1</div>
<div class="cell" style="left:2370.7px;top:2156.0px;background:#00a33b;color:#fff;-webkit-text-stroke:0.35px currentColor;">2</div>
<div class="cell" style="left:2461.1px;top:2156.0px;background:#00a33b;color:#fff;-webkit-text-stroke:0.35px currentColor;">2</div>
<div class="cell" style="left:2551.5px;top:2156.0px;background:#00a33b;color:#fff;-webkit-text-stroke:0.35px currentColor;">2</div>
<div class="cell" style="left:2641.8px;top:2156.0px;background:#00a33b;color:#fff;-webkit-text-stroke:0.35px currentColor;">1</div>
<div class="cell" style="left:2732.2px;top:2156.0px;background:#00a33b;color:#fff;-webkit-text-stroke:0.35px currentColor;">1</div>
<div class="cell" style="left:2822.6px;top:2156.0px;background:#00a33b;color:#fff;-webkit-text-stroke:0.35px currentColor;">1</div>
<div class="cell" style="left:2913.0px;top:2156.0px;background:#00a33b;color:#fff;-webkit-text-stroke:0.35px currentColor;">1</div>
<div class="cell" style="left:3003.3px;top:2156.0px;background:#00a33b;color:#fff;-webkit-text-stroke:0.35px currentColor;">1</div>
<div class="cell" style="left:3093.7px;top:2156.0px;background:#00a33b;color:#fff;-webkit-text-stroke:0.35px currentColor;">1</div>
<div class="cell" style="left:3184.1px;top:2156.0px;background:#00a33b;color:#fff;-webkit-text-stroke:0.35px currentColor;">1</div>
<div class="cell" style="left:3274.4px;top:2156.0px;background:#00a33b;color:#fff;-webkit-text-stroke:0.35px currentColor;">1</div>
<div class="cell" style="left:3364.8px;top:2156.0px;background:#00a33b;color:#fff;-webkit-text-stroke:0.35px currentColor;">1</div>
<div class="cell" style="left:3455.2px;top:2156.0px;background:#00a33b;color:#fff;-webkit-text-stroke:0.35px currentColor;">2</div>
<div class="cell" style="left:3545.6px;top:2156.0px;background:#00a33b;color:#fff;-webkit-text-stroke:0.35px currentColor;">1</div>
<div class="cell" style="left:3635.9px;top:2156.0px;background:#00a33b;color:#fff;-webkit-text-stroke:0.35px currentColor;">1</div>
<div class="cell" style="left:3726.3px;top:2156.0px;background:#00a33b;color:#fff;-webkit-text-stroke:0.35px currentColor;">2</div>
<div class="cell" style="left:3816.7px;top:2156.0px;background:#00a33b;color:#fff;-webkit-text-stroke:0.35px currentColor;">1</div>
<svg class="r" style="left:3924.0px;top:2170.0px;" width="28" height="28" viewBox="0 0 28 28"><circle cx="14" cy="14" r="14" fill="#6b7280"/><rect x="12.3" y="6" width="3.4" height="10" rx="1.5" fill="#fff"/><circle cx="14" cy="20.5" r="2" fill="#fff"/></svg>
<svg class="r" style="left:3976.0px;top:2172.0px;" width="28" height="25" viewBox="0 0 28 25"><path d="M2 1.5 L2 23 L27 23" fill="none" stroke="#6b7280" stroke-width="3" stroke-linecap="round"/><path d="M7 16 L13 9 L17 13 L25 5" fill="none" stroke="#6b7280" stroke-width="3" stroke-linecap="round" stroke-linejoin="round"/></svg>
<svg class="r" style="left:4027.0px;top:2170.0px;" width="24" height="29" viewBox="0 0 24 29"><path d="M1.5 6 L22.5 6" stroke="#6b7280" stroke-width="2.6" stroke-linecap="round"/><path d="M8 6 L8 2.5 Q8 1.3 9.2 1.3 L14.8 1.3 Q16 1.3 16 2.5 L16 6" fill="none" stroke="#6b7280" stroke-width="2.4"/><path d="M3.5 6 L4.5 26 Q4.6 27.7 6.3 27.7 L17.7 27.7 Q19.4 27.7 19.5 26 L20.5 6" fill="none" stroke="#6b7280" stroke-width="2.6"/><path d="M9 11 L9 23 M12 11 L12 23 M15 11 L15 23" stroke="#6b7280" stroke-width="2"/></svg>
<div class="r" style="left:513.0px;top:2297.0px;width:318.0px;height:62.0px;border:2px solid #d1d5db;border-radius:10px;background:#fff;"></div>
<div class="t" style="left:536.5px;top:2313.8px;font-size:31px;letter-spacing:-0.53px;color:#4b5563;-webkit-text-stroke:0.35px currentColor;">50 / page</div>
<svg class="r" style="left:784.0px;top:2322.0px;" width="22" height="12" viewBox="0 0 22 12"><path d="M1.5 1.5 L11 10.5 L20.5 1.5" fill="none" stroke="#9ca3af" stroke-width="2"/></svg>
<div class="r" style="left:865.0px;top:2297.0px;width:349.0px;height:62.0px;border:2px solid #d1d5db;border-radius:10px;background:#fff;"></div>
<div class="r" style="left:906.0px;top:2299.0px;width:2.0px;height:58.0px;background:#d1d5db;"></div>
<div class="r" style="left:975.0px;top:2299.0px;width:2.0px;height:58.0px;background:#d1d5db;"></div>
<div class="r" style="left:1041.0px;top:2299.0px;width:2.0px;height:58.0px;background:#d1d5db;"></div>
<div class="r" style="left:1106.0px;top:2299.0px;width:2.0px;height:58.0px;background:#d1d5db;"></div>
<div class="r" style="left:1174.0px;top:2299.0px;width:2.0px;height:58.0px;background:#d1d5db;"></div>
<div class="r" style="left:906.0px;top:2297.0px;width:70.0px;height:62.0px;border:2.5px solid #22b04a;background:#f0f7f2;"></div>
<svg class="r" style="left:879.0px;top:2318.0px;" width="12" height="20" viewBox="0 0 12 20"><path d="M10 2 L2 10 L10 18" fill="none" stroke="#d1d5db" stroke-width="2"/></svg>
<svg class="r" style="left:1188.0px;top:2318.0px;" width="12" height="20" viewBox="0 0 12 20"><path d="M2 2 L10 10 L2 18" fill="none" stroke="#374151" stroke-width="2"/></svg>
<div class="t" style="left:911.0px;top:2313.8px;font-size:31px;width:60px;text-align:center;color:#0b7a4b;-webkit-text-stroke:0.9px currentColor;">1</div>
<div class="t" style="left:978.0px;top:2313.8px;font-size:31px;width:60px;text-align:center;color:#2b3950;">2</div>
<div class="t" style="left:1043.5px;top:2313.8px;font-size:31px;width:60px;text-align:center;color:#2b3950;">3</div>
<div class="t" style="left:1110.0px;top:2313.8px;font-size:31px;width:60px;text-align:center;color:#2b3950;">4</div>
<div class="t" style="left:1247.0px;top:2313.8px;font-size:31px;letter-spacing:-1.39px;color:#9ca3af;-webkit-text-stroke:0.35px currentColor;">Results: 179</div>
<div class="r" style="left:3831.0px;top:2297.0px;width:310.0px;height:62.0px;background:#e6f2ee;border:2px solid #82bfa8;border-radius:12px;"></div>
<div class="t" style="left:3858.0px;top:2313.8px;font-size:31px;letter-spacing:-0.67px;color:#0b7a52;-webkit-text-stroke:0.9px currentColor;">Download Excel list</div>
<div class="r" style="left:0;top:2300px;width:3480px;height:84px;background:linear-gradient(to bottom, rgba(0,0,0,0) 0%, rgba(0,0,0,0.025) 45%, rgba(0,0,0,0.12) 100%);-webkit-mask-image:linear-gradient(to right, #000 0, #000 3150px, transparent 3480px);"></div>
<div class="r" style="left:0;top:2360px;width:24px;height:24px;background:radial-gradient(circle at 100% 0, rgba(0,0,0,0) 23px, #9a9a9a 24.5px);"></div>
<div class="r" style="left:4150px;top:2360px;width:24px;height:24px;background:radial-gradient(circle at 0 0, rgba(0,0,0,0) 23px, #000 24.5px);"></div>
</body></html>
